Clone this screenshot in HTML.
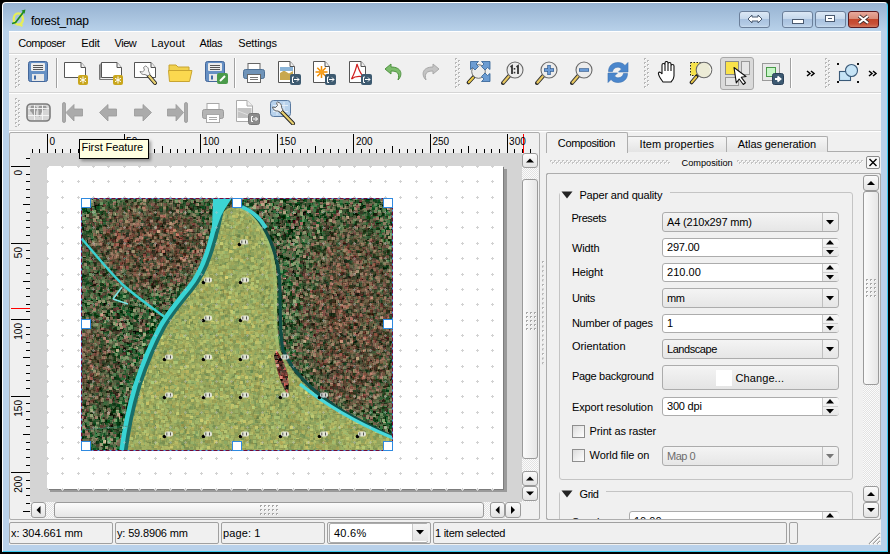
<!DOCTYPE html>
<html><head><meta charset="utf-8"><style>
html,body{margin:0;padding:0;}
body{width:890px;height:554px;overflow:hidden;position:relative;background:#000;font-family:"Liberation Sans",sans-serif;}
body div{position:absolute;box-sizing:content-box;}
.t{white-space:nowrap;}
</style></head><body>
<div style="left:2px;top:2px;width:884px;height:548px;background:linear-gradient(#97b3d2 0px,#b9d2ea 29px,#b9d1ea 29px);border-style:solid;border-width:1px;border-color:#fff #3dcaf0 #3dcaf0 #fff;border-radius:4px 4px 0 0;"></div>
<svg style="position:absolute;left:10px;top:9px;" width="17" height="18" viewBox="0 0 17 18"><ellipse cx="8.3" cy="10" rx="4.6" ry="5.6" fill="none" stroke="#e6ee58" stroke-width="2.4"/><path d="M9 15 L12.5 17" stroke="#e6ee58" stroke-width="2.2"/><path d="M2 14.5 L5.5 13.5 L13.5 3" stroke="#1f8a1f" stroke-width="1.7" fill="none"/><path d="M11.5 1.5 L15.5 0.5 L14.5 4.8 Z" fill="#1f8a1f"/></svg>
<div class="t" style="left:31px;top:14.74px;font-size:12px;line-height:12px;color:#000;letter-spacing:-0.239px;">forest_map</div>
<div style="left:739px;top:11px;width:29px;height:15px;border:1px solid #6b7f9a;border-radius:3px;background:linear-gradient(#dce8f5 0%,#c6d8ec 45%,#a9c2df 50%,#b4cbe5 85%,#c9dcef 100%);"></div>
<svg style="position:absolute;left:747px;top:14px;" width="16" height="10" viewBox="0 0 16 10"><path d="M1 5 L5 1 L5 3 L11 3 L11 1 L15 5 L11 9 L11 7 L5 7 L5 9 Z" fill="#fff" stroke="#4a5a70" stroke-width="1"/></svg>
<div style="left:782px;top:11px;width:29px;height:15px;border:1px solid #6b7f9a;border-radius:3px;background:linear-gradient(#dce8f5 0%,#c6d8ec 45%,#a9c2df 50%,#b4cbe5 85%,#c9dcef 100%);"></div>
<div style="left:792px;top:19px;width:10px;height:3px;background:#fff;border:1px solid #4a5a70;"></div>
<div style="left:815px;top:11px;width:29px;height:15px;border:1px solid #6b7f9a;border-radius:3px;background:linear-gradient(#dce8f5 0%,#c6d8ec 45%,#a9c2df 50%,#b4cbe5 85%,#c9dcef 100%);"></div>
<div style="left:825px;top:15px;width:8px;height:5px;border:1px solid #4a5a70;box-shadow:inset 0 0 0 2px #fff, inset 0 0 0 3px #4a5a70;"></div>
<div style="left:848px;top:11px;width:29px;height:15px;border:1px solid #5a1a20;border-radius:3px;background:linear-gradient(#e8a99c 0%,#d98b78 45%,#c3472c 50%,#c85038 80%,#d2785e 100%);"></div>
<svg style="position:absolute;left:857px;top:14px;" width="13" height="11" viewBox="0 0 13 11"><path d="M2 2 L11 9 M11 2 L2 9" stroke="#3c2a2a" stroke-width="3.6"/><path d="M2 2 L11 9 M11 2 L2 9" stroke="#fff" stroke-width="2.2"/></svg>
<div style="left:9px;top:31px;width:872px;height:514px;background:#f0f0f0;"></div>
<div style="left:9px;top:31px;width:872px;height:1px;background:#fff;"></div>
<div class="t" style="left:18.2px;top:37.59px;font-size:11px;line-height:11px;color:#000;letter-spacing:-0.468px;">Composer</div>
<div class="t" style="left:81.3px;top:37.59px;font-size:11px;line-height:11px;color:#000;letter-spacing:-0.133px;">Edit</div>
<div class="t" style="left:114.6px;top:37.59px;font-size:11px;line-height:11px;color:#000;letter-spacing:-0.500px;">View</div>
<div class="t" style="left:151.2px;top:37.59px;font-size:11px;line-height:11px;color:#000;letter-spacing:0.106px;">Layout</div>
<div class="t" style="left:199.6px;top:37.59px;font-size:11px;line-height:11px;color:#000;letter-spacing:-0.364px;">Atlas</div>
<div class="t" style="left:238.2px;top:37.59px;font-size:11px;line-height:11px;color:#000;letter-spacing:-0.135px;">Settings</div>
<div style="left:9px;top:53px;width:872px;height:1px;background:#d5d5d5;"></div>
<div style="left:9px;top:54px;width:872px;height:1px;background:#fff;"></div>
<div style="left:9px;top:92px;width:872px;height:1px;background:#d5d5d5;"></div>
<div style="left:9px;top:93px;width:872px;height:1px;background:#fff;"></div>
<div style="left:9px;top:130px;width:872px;height:1px;background:#d5d5d5;"></div>
<div style="left:9px;top:131px;width:872px;height:1px;background:#fff;"></div>
<svg style="position:absolute;left:15px;top:58px;" width="6" height="30" viewBox="0 0 6 30"><rect x="0" y="0" width="2" height="2" fill="#b8b8b8"/><rect x="1" y="1" width="1" height="1" fill="#fff"/><rect x="3" y="2" width="2" height="2" fill="#b8b8b8"/><rect x="4" y="3" width="1" height="1" fill="#fff"/><rect x="0" y="4" width="2" height="2" fill="#b8b8b8"/><rect x="1" y="5" width="1" height="1" fill="#fff"/><rect x="3" y="6" width="2" height="2" fill="#b8b8b8"/><rect x="4" y="7" width="1" height="1" fill="#fff"/><rect x="0" y="8" width="2" height="2" fill="#b8b8b8"/><rect x="1" y="9" width="1" height="1" fill="#fff"/><rect x="3" y="10" width="2" height="2" fill="#b8b8b8"/><rect x="4" y="11" width="1" height="1" fill="#fff"/><rect x="0" y="12" width="2" height="2" fill="#b8b8b8"/><rect x="1" y="13" width="1" height="1" fill="#fff"/><rect x="3" y="14" width="2" height="2" fill="#b8b8b8"/><rect x="4" y="15" width="1" height="1" fill="#fff"/><rect x="0" y="16" width="2" height="2" fill="#b8b8b8"/><rect x="1" y="17" width="1" height="1" fill="#fff"/><rect x="3" y="18" width="2" height="2" fill="#b8b8b8"/><rect x="4" y="19" width="1" height="1" fill="#fff"/><rect x="0" y="20" width="2" height="2" fill="#b8b8b8"/><rect x="1" y="21" width="1" height="1" fill="#fff"/><rect x="3" y="22" width="2" height="2" fill="#b8b8b8"/><rect x="4" y="23" width="1" height="1" fill="#fff"/><rect x="0" y="24" width="2" height="2" fill="#b8b8b8"/><rect x="1" y="25" width="1" height="1" fill="#fff"/><rect x="3" y="26" width="2" height="2" fill="#b8b8b8"/><rect x="4" y="27" width="1" height="1" fill="#fff"/><rect x="0" y="28" width="2" height="2" fill="#b8b8b8"/><rect x="1" y="29" width="1" height="1" fill="#fff"/><rect x="3" y="30" width="2" height="2" fill="#b8b8b8"/><rect x="4" y="31" width="1" height="1" fill="#fff"/></svg>
<svg style="position:absolute;left:455px;top:58px;" width="6" height="30" viewBox="0 0 6 30"><rect x="0" y="0" width="2" height="2" fill="#b8b8b8"/><rect x="1" y="1" width="1" height="1" fill="#fff"/><rect x="3" y="2" width="2" height="2" fill="#b8b8b8"/><rect x="4" y="3" width="1" height="1" fill="#fff"/><rect x="0" y="4" width="2" height="2" fill="#b8b8b8"/><rect x="1" y="5" width="1" height="1" fill="#fff"/><rect x="3" y="6" width="2" height="2" fill="#b8b8b8"/><rect x="4" y="7" width="1" height="1" fill="#fff"/><rect x="0" y="8" width="2" height="2" fill="#b8b8b8"/><rect x="1" y="9" width="1" height="1" fill="#fff"/><rect x="3" y="10" width="2" height="2" fill="#b8b8b8"/><rect x="4" y="11" width="1" height="1" fill="#fff"/><rect x="0" y="12" width="2" height="2" fill="#b8b8b8"/><rect x="1" y="13" width="1" height="1" fill="#fff"/><rect x="3" y="14" width="2" height="2" fill="#b8b8b8"/><rect x="4" y="15" width="1" height="1" fill="#fff"/><rect x="0" y="16" width="2" height="2" fill="#b8b8b8"/><rect x="1" y="17" width="1" height="1" fill="#fff"/><rect x="3" y="18" width="2" height="2" fill="#b8b8b8"/><rect x="4" y="19" width="1" height="1" fill="#fff"/><rect x="0" y="20" width="2" height="2" fill="#b8b8b8"/><rect x="1" y="21" width="1" height="1" fill="#fff"/><rect x="3" y="22" width="2" height="2" fill="#b8b8b8"/><rect x="4" y="23" width="1" height="1" fill="#fff"/><rect x="0" y="24" width="2" height="2" fill="#b8b8b8"/><rect x="1" y="25" width="1" height="1" fill="#fff"/><rect x="3" y="26" width="2" height="2" fill="#b8b8b8"/><rect x="4" y="27" width="1" height="1" fill="#fff"/><rect x="0" y="28" width="2" height="2" fill="#b8b8b8"/><rect x="1" y="29" width="1" height="1" fill="#fff"/><rect x="3" y="30" width="2" height="2" fill="#b8b8b8"/><rect x="4" y="31" width="1" height="1" fill="#fff"/></svg>
<svg style="position:absolute;left:644px;top:58px;" width="6" height="30" viewBox="0 0 6 30"><rect x="0" y="0" width="2" height="2" fill="#b8b8b8"/><rect x="1" y="1" width="1" height="1" fill="#fff"/><rect x="3" y="2" width="2" height="2" fill="#b8b8b8"/><rect x="4" y="3" width="1" height="1" fill="#fff"/><rect x="0" y="4" width="2" height="2" fill="#b8b8b8"/><rect x="1" y="5" width="1" height="1" fill="#fff"/><rect x="3" y="6" width="2" height="2" fill="#b8b8b8"/><rect x="4" y="7" width="1" height="1" fill="#fff"/><rect x="0" y="8" width="2" height="2" fill="#b8b8b8"/><rect x="1" y="9" width="1" height="1" fill="#fff"/><rect x="3" y="10" width="2" height="2" fill="#b8b8b8"/><rect x="4" y="11" width="1" height="1" fill="#fff"/><rect x="0" y="12" width="2" height="2" fill="#b8b8b8"/><rect x="1" y="13" width="1" height="1" fill="#fff"/><rect x="3" y="14" width="2" height="2" fill="#b8b8b8"/><rect x="4" y="15" width="1" height="1" fill="#fff"/><rect x="0" y="16" width="2" height="2" fill="#b8b8b8"/><rect x="1" y="17" width="1" height="1" fill="#fff"/><rect x="3" y="18" width="2" height="2" fill="#b8b8b8"/><rect x="4" y="19" width="1" height="1" fill="#fff"/><rect x="0" y="20" width="2" height="2" fill="#b8b8b8"/><rect x="1" y="21" width="1" height="1" fill="#fff"/><rect x="3" y="22" width="2" height="2" fill="#b8b8b8"/><rect x="4" y="23" width="1" height="1" fill="#fff"/><rect x="0" y="24" width="2" height="2" fill="#b8b8b8"/><rect x="1" y="25" width="1" height="1" fill="#fff"/><rect x="3" y="26" width="2" height="2" fill="#b8b8b8"/><rect x="4" y="27" width="1" height="1" fill="#fff"/><rect x="0" y="28" width="2" height="2" fill="#b8b8b8"/><rect x="1" y="29" width="1" height="1" fill="#fff"/><rect x="3" y="30" width="2" height="2" fill="#b8b8b8"/><rect x="4" y="31" width="1" height="1" fill="#fff"/></svg>
<svg style="position:absolute;left:825px;top:58px;" width="6" height="30" viewBox="0 0 6 30"><rect x="0" y="0" width="2" height="2" fill="#b8b8b8"/><rect x="1" y="1" width="1" height="1" fill="#fff"/><rect x="3" y="2" width="2" height="2" fill="#b8b8b8"/><rect x="4" y="3" width="1" height="1" fill="#fff"/><rect x="0" y="4" width="2" height="2" fill="#b8b8b8"/><rect x="1" y="5" width="1" height="1" fill="#fff"/><rect x="3" y="6" width="2" height="2" fill="#b8b8b8"/><rect x="4" y="7" width="1" height="1" fill="#fff"/><rect x="0" y="8" width="2" height="2" fill="#b8b8b8"/><rect x="1" y="9" width="1" height="1" fill="#fff"/><rect x="3" y="10" width="2" height="2" fill="#b8b8b8"/><rect x="4" y="11" width="1" height="1" fill="#fff"/><rect x="0" y="12" width="2" height="2" fill="#b8b8b8"/><rect x="1" y="13" width="1" height="1" fill="#fff"/><rect x="3" y="14" width="2" height="2" fill="#b8b8b8"/><rect x="4" y="15" width="1" height="1" fill="#fff"/><rect x="0" y="16" width="2" height="2" fill="#b8b8b8"/><rect x="1" y="17" width="1" height="1" fill="#fff"/><rect x="3" y="18" width="2" height="2" fill="#b8b8b8"/><rect x="4" y="19" width="1" height="1" fill="#fff"/><rect x="0" y="20" width="2" height="2" fill="#b8b8b8"/><rect x="1" y="21" width="1" height="1" fill="#fff"/><rect x="3" y="22" width="2" height="2" fill="#b8b8b8"/><rect x="4" y="23" width="1" height="1" fill="#fff"/><rect x="0" y="24" width="2" height="2" fill="#b8b8b8"/><rect x="1" y="25" width="1" height="1" fill="#fff"/><rect x="3" y="26" width="2" height="2" fill="#b8b8b8"/><rect x="4" y="27" width="1" height="1" fill="#fff"/><rect x="0" y="28" width="2" height="2" fill="#b8b8b8"/><rect x="1" y="29" width="1" height="1" fill="#fff"/><rect x="3" y="30" width="2" height="2" fill="#b8b8b8"/><rect x="4" y="31" width="1" height="1" fill="#fff"/></svg>
<svg style="position:absolute;left:15px;top:98px;" width="6" height="29" viewBox="0 0 6 29"><rect x="0" y="0" width="2" height="2" fill="#b8b8b8"/><rect x="1" y="1" width="1" height="1" fill="#fff"/><rect x="3" y="2" width="2" height="2" fill="#b8b8b8"/><rect x="4" y="3" width="1" height="1" fill="#fff"/><rect x="0" y="4" width="2" height="2" fill="#b8b8b8"/><rect x="1" y="5" width="1" height="1" fill="#fff"/><rect x="3" y="6" width="2" height="2" fill="#b8b8b8"/><rect x="4" y="7" width="1" height="1" fill="#fff"/><rect x="0" y="8" width="2" height="2" fill="#b8b8b8"/><rect x="1" y="9" width="1" height="1" fill="#fff"/><rect x="3" y="10" width="2" height="2" fill="#b8b8b8"/><rect x="4" y="11" width="1" height="1" fill="#fff"/><rect x="0" y="12" width="2" height="2" fill="#b8b8b8"/><rect x="1" y="13" width="1" height="1" fill="#fff"/><rect x="3" y="14" width="2" height="2" fill="#b8b8b8"/><rect x="4" y="15" width="1" height="1" fill="#fff"/><rect x="0" y="16" width="2" height="2" fill="#b8b8b8"/><rect x="1" y="17" width="1" height="1" fill="#fff"/><rect x="3" y="18" width="2" height="2" fill="#b8b8b8"/><rect x="4" y="19" width="1" height="1" fill="#fff"/><rect x="0" y="20" width="2" height="2" fill="#b8b8b8"/><rect x="1" y="21" width="1" height="1" fill="#fff"/><rect x="3" y="22" width="2" height="2" fill="#b8b8b8"/><rect x="4" y="23" width="1" height="1" fill="#fff"/><rect x="0" y="24" width="2" height="2" fill="#b8b8b8"/><rect x="1" y="25" width="1" height="1" fill="#fff"/><rect x="3" y="26" width="2" height="2" fill="#b8b8b8"/><rect x="4" y="27" width="1" height="1" fill="#fff"/><rect x="0" y="28" width="2" height="2" fill="#b8b8b8"/><rect x="1" y="29" width="1" height="1" fill="#fff"/><rect x="3" y="30" width="2" height="2" fill="#b8b8b8"/><rect x="4" y="31" width="1" height="1" fill="#fff"/></svg>
<div style="left:56px;top:58px;width:1px;height:30px;background:#a0a0a0;"></div>
<div style="left:57px;top:58px;width:1px;height:30px;background:#fff;"></div>
<div style="left:234px;top:58px;width:1px;height:30px;background:#a0a0a0;"></div>
<div style="left:235px;top:58px;width:1px;height:30px;background:#fff;"></div>
<div style="left:790px;top:58px;width:1px;height:30px;background:#a0a0a0;"></div>
<div style="left:791px;top:58px;width:1px;height:30px;background:#fff;"></div>
<svg style="position:absolute;left:28px;top:61px;" width="20" height="21" viewBox="0 0 20 21"><rect x="0.5" y="0.5" width="19" height="20" rx="2" fill="#6690c4" stroke="#44679a"/><rect x="3" y="2" width="14" height="8" rx="1" fill="#ececec"/><path d="M5 4.5H15M5 6.5H15M5 8.5H15" stroke="#555" stroke-width="1"/><rect x="4" y="13" width="12" height="7" fill="#e8e8e8"/><rect x="6" y="14.5" width="2" height="4" fill="#3f6aa6"/></svg>
<svg style="position:absolute;left:64px;top:61px;" width="24" height="24" viewBox="0 0 24 24"><path d="M0.5 1.5 H17 L21.5 6.5 V16.5 H0.5 Z" fill="#fff" stroke="#555" stroke-width="1"/><path d="M17 1.5 V6.5 H21.5" fill="#eee" stroke="#555" stroke-width="1"/><rect x="14" y="14" width="10" height="10" rx="2" fill="#c9a61c"/><path d="M19 15.5 V22.5 M16 17.3 L22 20.7 M22 17.3 L16 20.7" stroke="#fff" stroke-width="1"/></svg>
<svg style="position:absolute;left:99px;top:61px;" width="24" height="24" viewBox="0 0 24 24"><path d="M0.5 3.5 V18.5 H18" fill="none" stroke="#777" stroke-width="1"/><path d="M1.5 2.5 V17.5" stroke="#999"/><path d="M2.5 1.5 H18 L22.5 6.5 V16.5 H2.5 Z" fill="#fff" stroke="#555" stroke-width="1"/><path d="M18 1.5 V6.5 H22.5" fill="#eee" stroke="#555" stroke-width="1"/><rect x="14" y="14" width="10" height="10" rx="2" fill="#c9a61c"/><path d="M19 15.5 V22.5 M16 17.3 L22 20.7 M22 17.3 L16 20.7" stroke="#fff" stroke-width="1"/></svg>
<svg style="position:absolute;left:133px;top:61px;" width="26" height="25" viewBox="0 0 26 25"><path d="M1.5 1.5 H18 L22.5 6.5 V16.5 H1.5 Z" fill="#fff" stroke="#555" stroke-width="1"/><path d="M18 1.5 V6.5 H22.5" fill="#eee" stroke="#555" stroke-width="1"/><path d="M15.5 14.5 L22 22" stroke="#222" stroke-width="4" stroke-linecap="round"/><path d="M16 15 L22 22" stroke="#e8d070" stroke-width="2.2" stroke-linecap="round"/><path d="M12.5 5 C14.5 5.5 16 7.5 15.5 10 L17 13 L15 15 L12 13.5 C9.5 14 7.5 12.5 7 10.5 L9.5 11 L11.5 9 L10.5 6.5 Z" fill="#f4f4f4" stroke="#777" stroke-width="0.9"/></svg>
<svg style="position:absolute;left:168px;top:63px;" width="25" height="19" viewBox="0 0 25 19"><path d="M1 2 H8 L10 4 H21 V8 H1 Z" fill="#f1d14e" stroke="#c8a430"/><path d="M0.5 7.5 H24 L21.5 18.5 H1.5 Z" fill="#fbd84f" stroke="#c8a430"/></svg>
<svg style="position:absolute;left:205px;top:61px;" width="24" height="24" viewBox="0 0 24 24"><rect x="0.5" y="0.5" width="19" height="20" rx="2" fill="#6690c4" stroke="#44679a"/><rect x="3" y="2" width="14" height="8" rx="1" fill="#ececec"/><path d="M5 4.5H15M5 6.5H15M5 8.5H15" stroke="#555" stroke-width="1"/><rect x="4" y="13" width="12" height="7" fill="#e8e8e8"/><rect x="6" y="14.5" width="2" height="4" fill="#3f6aa6"/><rect x="12" y="12" width="11" height="11" rx="2" fill="#4a9a4a"/><path d="M15 20 L20 15" stroke="#fff" stroke-width="2"/></svg>
<svg style="position:absolute;left:243px;top:63px;" width="22" height="20" viewBox="0 0 22 20"><rect x="5" y="0.5" width="12" height="7" fill="#fff" stroke="#666"/><rect x="0.5" y="6.5" width="21" height="9" rx="2" fill="#6f93b8" stroke="#4c6f94"/><rect x="4.5" y="11.5" width="13" height="8" fill="#fff" stroke="#666"/><path d="M7 14.5H15M7 16.5H15" stroke="#777"/></svg>
<svg style="position:absolute;left:278px;top:61px;" width="25" height="25" viewBox="0 0 25 25"><path d="M0.5 0.5 H12 L16.5 5.5 V21.5 H0.5 Z" fill="#fff" stroke="#555" stroke-width="1"/><path d="M12 0.5 V5.5 H16.5" fill="#eee" stroke="#555" stroke-width="1"/><path d="M2 19 L2 12 L6 9.5 L11 12.5 L15 10 V19 Z" fill="#c8a850"/><path d="M2 8 H15" stroke="#8ab4d8" stroke-width="4"/><rect x="12" y="13" width="11" height="11" rx="2" fill="#3d5a70"/><path d="M16 16 H14.5 V21.5 H16" stroke="#fff" fill="none" stroke-width="1"/><path d="M16 18.5 H21 M19 16.5 L21 18.5 L19 20.5" stroke="#fff" fill="none" stroke-width="1"/></svg>
<svg style="position:absolute;left:313px;top:61px;" width="25" height="25" viewBox="0 0 25 25"><path d="M0.5 0.5 H12 L16.5 5.5 V21.5 H0.5 Z" fill="#fff" stroke="#555" stroke-width="1"/><path d="M12 0.5 V5.5 H16.5" fill="#eee" stroke="#555" stroke-width="1"/><g stroke="#f08c00" stroke-width="1.5"><path d="M8.5 5 V17 M2.5 11 H14.5 M4.3 6.8 L12.7 15.2 M12.7 6.8 L4.3 15.2"/></g><circle cx="8.5" cy="11" r="2.5" fill="#f6a020"/><rect x="12" y="13" width="11" height="11" rx="2" fill="#3d5a70"/><path d="M16 16 H14.5 V21.5 H16" stroke="#fff" fill="none" stroke-width="1"/><path d="M16 18.5 H21 M19 16.5 L21 18.5 L19 20.5" stroke="#fff" fill="none" stroke-width="1"/></svg>
<svg style="position:absolute;left:349px;top:61px;" width="25" height="25" viewBox="0 0 25 25"><path d="M0.5 0.5 H12 L16.5 5.5 V21.5 H0.5 Z" fill="#fff" stroke="#555" stroke-width="1"/><path d="M12 0.5 V5.5 H16.5" fill="#eee" stroke="#555" stroke-width="1"/><path d="M8 3 C10 9 11 13 15 16 C11 15 6 15 2.5 18 C5 13 7 9 8 3 Z" fill="none" stroke="#d02020" stroke-width="1.3"/><rect x="12" y="13" width="11" height="11" rx="2" fill="#3d5a70"/><path d="M16 16 H14.5 V21.5 H16" stroke="#fff" fill="none" stroke-width="1"/><path d="M16 18.5 H21 M19 16.5 L21 18.5 L19 20.5" stroke="#fff" fill="none" stroke-width="1"/></svg>
<svg style="position:absolute;left:384px;top:63px;" width="20" height="18" viewBox="0 0 20 18"><path d="M7 1 L1 6 L7 11 V8 C13 8 16 10 14 17 C19 12 18 4 7 4 Z" fill="#7cbc6c" stroke="#4e9240" stroke-width="1"/></svg>
<svg style="position:absolute;left:420px;top:63px;" width="20" height="18" viewBox="0 0 20 18"><path d="M13 1 L19 6 L13 11 V8 C7 8 4 10 6 17 C1 12 2 4 13 4 Z" fill="#c4c4c4" stroke="#a8a8a8" stroke-width="1"/></svg>
<svg style="position:absolute;left:466px;top:61px;" width="25" height="25" viewBox="0 0 25 25"><path d="M8 15.5 L2.5 21.5" stroke="#222" stroke-width="3.6" stroke-linecap="round"/><path d="M7.2 16.5 L2.8 21.2" stroke="#eac848" stroke-width="2" stroke-linecap="round"/><circle cx="12.5" cy="10.5" r="6.8" fill="#ececec" stroke="#666" stroke-width="0.9"/><g fill="#6c9cd2" stroke="#2f5f94" stroke-width="0.8"><path d="M4.5 0.5 H12.5 L10 3 L12.5 5.5 L9 9 L6.5 6.5 L4.5 8.5 Z"/><path d="M24 0.5 H15.5 L18 3 L15.5 5.5 L19 9 L21.5 6.5 L24 8.5 Z"/><path d="M24 20.5 H15.5 L18 18 L15.5 15.5 L19 12 L21.5 14.5 L24 12.5 Z"/></g></svg>
<svg style="position:absolute;left:501px;top:61px;" width="25" height="24" viewBox="0 0 25 24"><path d="M8.4 14.6 L2 22" stroke="#333" stroke-width="4" stroke-linecap="round"/><path d="M8.4 14.6 L2.5 21.5" stroke="#e8c860" stroke-width="2.2" stroke-linecap="round"/><circle cx="14" cy="9" r="8" fill="#ececec" stroke="#6a6a6a" stroke-width="1.1"/><path d="M9.5 6 L11 5 V13 M15.5 6 L17 5 V13" stroke="#333" stroke-width="1.8" fill="none"/><rect x="12.7" y="7" width="1.6" height="1.6" fill="#333"/><rect x="12.7" y="10.8" width="1.6" height="1.6" fill="#333"/></svg>
<svg style="position:absolute;left:535px;top:61px;" width="24" height="24" viewBox="0 0 24 24"><path d="M8.4 14.6 L2 22" stroke="#333" stroke-width="4" stroke-linecap="round"/><path d="M8.4 14.6 L2.5 21.5" stroke="#e8c860" stroke-width="2.2" stroke-linecap="round"/><circle cx="14" cy="9" r="8" fill="#ececec" stroke="#6a6a6a" stroke-width="1.1"/><path d="M14 4 V14 M9 9 H19" stroke="#2e5a90" stroke-width="3.4"/><path d="M14 4.6 V13.4 M9.6 9 H18.4" stroke="#6a9ad4" stroke-width="2"/></svg>
<svg style="position:absolute;left:570px;top:61px;" width="25" height="24" viewBox="0 0 25 24"><path d="M8.4 14.6 L2 22" stroke="#333" stroke-width="4" stroke-linecap="round"/><path d="M8.4 14.6 L2.5 21.5" stroke="#e8c860" stroke-width="2.2" stroke-linecap="round"/><circle cx="14" cy="9" r="8" fill="#ececec" stroke="#6a6a6a" stroke-width="1.1"/><path d="M9 9 H19" stroke="#2e5a90" stroke-width="3.4"/><path d="M9.6 9 H18.4" stroke="#6a9ad4" stroke-width="2"/></svg>
<svg style="position:absolute;left:607px;top:61px;" width="22" height="23" viewBox="0 0 22 23"><g fill="#4a86cc" stroke="#3a70b0" stroke-width="0.6"><path d="M1.5 10.5 C1.5 4.5 6 1.5 11 1.5 C14 1.5 16.5 2.5 18 4.5 L21 1.5 V11 H11.5 L14.5 8 C13.5 6.8 12.3 6.2 10.8 6.2 C8 6.2 6 8 5.5 10.5 Z"/><path d="M1.5 10.5 C1.5 4.5 6 1.5 11 1.5 C14 1.5 16.5 2.5 18 4.5 L21 1.5 V11 H11.5 L14.5 8 C13.5 6.8 12.3 6.2 10.8 6.2 C8 6.2 6 8 5.5 10.5 Z" transform="rotate(180 11 11.5)"/></g></svg>
<svg style="position:absolute;left:657px;top:61px;" width="22" height="24" viewBox="0 0 22 24"><path d="M6 21 C3 17 1 14 1.5 12 C2 10.5 4 11 5 13 V4 C5 2 8 2 8 4 V10 V2 C8 0 11 0 11 2 V10 V3 C11 1 14 1 14 3 V10 V5 C14 3 17 3 17 5 V15 C17 18 15 20 14 21 Z" fill="#fff" stroke="#111" stroke-width="1.1"/></svg>
<svg style="position:absolute;left:689px;top:61px;" width="26" height="24" viewBox="0 0 26 24"><rect x="1.5" y="1.5" width="10" height="13" fill="#f6e24a" stroke="#222" stroke-dasharray="1.5 1.5"/><path d="M8 15 L2.5 21.5" stroke="#222" stroke-width="3.6" stroke-linecap="round"/><path d="M7.2 16 L2.8 21.2" stroke="#eac848" stroke-width="2" stroke-linecap="round"/><circle cx="15" cy="9" r="7.8" fill="#ecebd6" stroke="#6a6a6a" stroke-width="1.1"/><path d="M20 5 A5.5 5.5 0 0 1 21 12" stroke="#fff" stroke-width="1" fill="none" opacity="0.7"/></svg>
<div style="left:720px;top:57px;width:32px;height:31px;border:1px solid #a8a8a8;border-radius:3px;background:#dadada;"></div>
<svg style="position:absolute;left:725px;top:61px;" width="27" height="27" viewBox="0 0 27 27"><rect x="0.5" y="0.5" width="13" height="13" fill="#f9e24a" stroke="#8a8a8a"/><rect x="16.5" y="0.5" width="8" height="13" fill="#e6e6e6" stroke="#999"/><rect x="0.5" y="16.5" width="13" height="8" fill="#e6e6e6" stroke="#999"/><path d="M9 6.5 L21 15.5 L16.3 16.3 L20.5 21.8 L18.3 23.5 L14.2 18 L11.3 21.8 Z" fill="#fff" stroke="#111" stroke-width="1.1" stroke-linejoin="round"/></svg>
<svg style="position:absolute;left:762px;top:63px;" width="24" height="22" viewBox="0 0 24 22"><rect x="0.5" y="0.5" width="17" height="17" fill="#e8e8e8" stroke="#9a9a9a"/><rect x="4.5" y="4.5" width="9" height="9" fill="#c8f6c8" stroke="#4a9a4a"/><rect x="10.5" y="10.5" width="11" height="11" rx="2" fill="#3d5a72" stroke="#2a4058"/><path d="M13 16 H17 M15.5 13.5 L18.5 16 L15.5 18.5" stroke="#fff" stroke-width="1.8" fill="none"/></svg>
<svg style="position:absolute;left:806px;top:70px;" width="10" height="7" viewBox="0 0 10 7"><path d="M1 1 L4 3.5 L1 6 M5 1 L8 3.5 L5 6" stroke="#000" stroke-width="1.5" fill="none"/></svg>
<svg style="position:absolute;left:836px;top:62px;" width="24" height="22" viewBox="0 0 24 22"><rect x="3.5" y="9.5" width="11" height="9" fill="#c6e4f6" stroke="#3a5a78" stroke-width="1.1"/><circle cx="15.5" cy="8.5" r="6" fill="#c6e4f6" stroke="#3a5a78" stroke-width="1.1"/><g fill="#111"><rect x="1" y="1" width="2" height="2"/><rect x="21" y="1" width="2" height="2"/><rect x="1" y="19" width="2" height="2"/><rect x="21" y="19" width="2" height="2"/></g></svg>
<svg style="position:absolute;left:868px;top:70px;" width="10" height="7" viewBox="0 0 10 7"><path d="M1 1 L4 3.5 L1 6 M5 1 L8 3.5 L5 6" stroke="#000" stroke-width="1.5" fill="none"/></svg>
<svg style="position:absolute;left:26px;top:103px;" width="25" height="19" viewBox="0 0 25 19"><rect x="1" y="1" width="23" height="17" rx="4" fill="#d6d6d6" stroke="#7c7c7c" stroke-width="1.6"/><path d="M5 3 C9 2 12 4 11 7 C9 9 11 12 9 14 C7 12 6 9 4 8 Z M13 3 H20 L21 6 C19 7 17 6 16 9 C14 11 15 13 13 14 C12 11 13 8 12 6 Z" fill="#9a9a9a"/><path d="M2 5.5 H23 M2 12.5 H23 M8.5 2 V17 M16.5 2 V17" stroke="#f6f6f6" stroke-width="0.9"/></svg>
<svg style="position:absolute;left:62px;top:102px;" width="22" height="22" viewBox="0 0 22 22"><rect x="0.5" y="0.5" width="3" height="20" rx="1.5" fill="#ababab" stroke="#999" stroke-width="0.8"/><path d="M4 10.5 L12 2.5 V7 H20.5 V14 H12 V19 Z" fill="#ababab" stroke="#999" stroke-width="0.8"/></svg>
<svg style="position:absolute;left:99px;top:102px;" width="19" height="22" viewBox="0 0 19 22"><path d="M0.5 10.5 L9 2.5 V7 H17.5 V14 H9 V19 Z" fill="#ababab" stroke="#999" stroke-width="0.8"/></svg>
<svg style="position:absolute;left:134px;top:102px;" width="19" height="22" viewBox="0 0 19 22"><path d="M17.5 10.5 L9 2.5 V7 H0.5 V14 H9 V19 Z" fill="#ababab" stroke="#999" stroke-width="0.8"/></svg>
<svg style="position:absolute;left:167px;top:102px;" width="22" height="22" viewBox="0 0 22 22"><rect x="17.5" y="0.5" width="3" height="20" rx="1.5" fill="#ababab" stroke="#999" stroke-width="0.8"/><path d="M16.5 10.5 L9 2.5 V7 H0.5 V14 H9 V19 Z" fill="#ababab" stroke="#999" stroke-width="0.8"/></svg>
<svg style="position:absolute;left:202px;top:103px;" width="22" height="20" viewBox="0 0 22 20"><rect x="5" y="0.5" width="12" height="7" fill="#fff" stroke="#a8a8a8"/><rect x="0.5" y="6.5" width="21" height="9" rx="2" fill="#b4b4b4" stroke="#9a9a9a"/><rect x="4.5" y="11.5" width="13" height="8" fill="#fff" stroke="#a8a8a8"/><path d="M7 14.5H15M7 16.5H15" stroke="#aaa"/></svg>
<svg style="position:absolute;left:236px;top:100px;" width="26" height="25" viewBox="0 0 26 25"><path d="M0.5 .5 H11 L16.5 6 V21.5 H.5 Z" fill="#fff" stroke="#aaa"/><path d="M11 .5 V6 H16.5" fill="#eee" stroke="#aaa"/><rect x="1.5" y="8" width="14" height="10" fill="#c4c4c4"/><path d="M2 11 L15 16" stroke="#e0e0e0"/><rect x="12.5" y="13.5" width="11" height="11" rx="2" fill="#8c8c8c" stroke="#777"/><path d="M17 16.5 H15.5 V21.5 H17 M17 19 H21.5 M19.5 17 L21.5 19 L19.5 21" stroke="#fff" fill="none"/></svg>
<svg style="position:absolute;left:270px;top:100px;" width="26" height="25" viewBox="0 0 26 25"><rect x="0.5" y="0.5" width="20" height="16" rx="3" fill="#b8d2ec" stroke="#5a7aa0"/><path d="M3 5.5 H18 M3 11.5 H18 M7 2 V15 M14 2 V15" stroke="#e4eef8"/><path d="M10 10 L23 23.5" stroke="#222" stroke-width="4" stroke-linecap="round"/><path d="M10.5 10.5 L23 23.5" stroke="#e8d070" stroke-width="2.2" stroke-linecap="round"/><path d="M7.5 2 C10 2.5 12 4.5 11.5 7.5 L13 10 L10.5 12.5 L8 11 C5 11.5 3 9.5 2.5 7 L5.5 7.5 L7.5 5.5 L6.5 2.8 Z" fill="#f4f4f4" stroke="#555" stroke-width="0.9"/></svg>
<div style="left:9px;top:132px;width:529px;height:386px;border:1px solid #adadad;border-radius:2px;background:#f0f0f0;"></div>
<div style="left:30px;top:153px;width:492px;height:349px;background:#d4d4d4;"></div>
<div style="left:50px;top:169px;width:457px;height:323px;background:#9a9a9a;"></div>
<div style="left:48px;top:167px;width:456px;height:323px;background:#7c7c7c;"></div>
<div style="left:47px;top:166px;width:456px;height:323px;background:#fff;border-right:0;"></div>
<svg style="position:absolute;left:81px;top:198px;" width="312" height="253" viewBox="0 0 312 253"><defs><filter id="fz" x="0" y="0" width="100%" height="100%" color-interpolation-filters="sRGB"><feTurbulence type="fractalNoise" baseFrequency="0.7" numOctaves="1" seed="5"/><feMorphology operator="dilate" radius="1"/><feColorMatrix type="matrix" values="1.0 0 2.3 0 -1.6 -0.5 0 1.7 0 -0.31 0.1 0 1.6 0 -0.73 0 0 0 0 1"/></filter><filter id="fr" x="0" y="0" width="100%" height="100%" color-interpolation-filters="sRGB"><feTurbulence type="fractalNoise" baseFrequency="0.7" numOctaves="1" seed="9"/><feMorphology operator="dilate" radius="1"/><feColorMatrix type="matrix" values="1.1 0 2.3 0 -1.46 -0.2 0 1.7 0 -0.58 -0.1 0 1.5 0 -0.56 0 0 0 0 1"/></filter><filter id="ff" x="0" y="0" width="100%" height="100%" color-interpolation-filters="sRGB"><feTurbulence type="fractalNoise" baseFrequency="0.8" numOctaves="1" seed="2"/><feMorphology operator="dilate" radius="1"/><feColorMatrix type="matrix" values="0.5 0 0.7 0 -0.08 0.1 0 0.7 0 0.205 -0.1 0 0.45 0 0.17 0 0 0 0 1"/></filter><filter id="bl" x="-50%" y="-50%" width="200%" height="200%"><feGaussianBlur stdDeviation="14"/></filter></defs><g transform="translate(-81 -198)"><rect x="81" y="198" width="312" height="253" filter="url(#fz)"/><mask id="mr"><rect x="81" y="198" width="312" height="253" fill="#000"/><g filter="url(#bl)" fill="#fff"><ellipse cx="150" cy="245" rx="60" ry="42" opacity="0.85"/><ellipse cx="90" cy="365" rx="16" ry="50" opacity="0.9"/><ellipse cx="350" cy="320" rx="50" ry="95" opacity="0.75"/></g></mask><rect x="81" y="198" width="312" height="253" filter="url(#fr)" mask="url(#mr)" opacity="0.72"/><clipPath id="cf"><path d="M122 451 C125 430 130 410 137 385 C143 362 152 340 166 320 C178 303 192 288 206 268 C213 250 217 232 222 214 C226 208 232 206 240 207 C250 211 260 220 268 238 C274 252 277 268 277 290 C277 315 277 335 280 350 C290 372 310 392 335 408 C355 420 375 430 393 437 V451 Z"/></clipPath><g clip-path="url(#cf)"><rect x="81" y="198" width="312" height="253" filter="url(#ff)"/></g><path d="M236 205 C248 209 260 220 267 238 C273 252 276 268 276 290 C276 315 276 335 279 350" fill="none" stroke="#a4c878" stroke-width="5" opacity="0.55" clip-path="url(#cf)"/><clipPath id="ci"><path d="M276 350 C284 360 291 376 288 394 C282 388 277 372 274 356 Z"/></clipPath><rect x="270" y="345" width="25" height="55" filter="url(#fr)" clip-path="url(#ci)"/><path d="M240 205 C252 210 262 222 270 240 C276 254 280 270 280 292 C280 316 280 336 283 350 C293 372 313 392 338 408 C358 420 378 430 393 437" fill="none" stroke="#124e46" stroke-width="3.2"/><path d="M242 207 C252 211 260 218 266 228" fill="none" stroke="#40d0d0" stroke-width="4"/><path d="M300 384 C322 402 350 420 393 438" fill="none" stroke="#48d8dc" stroke-width="3"/><path d="M222 198 C219 212 216 228 211 244 C206 262 200 276 190 288 C180 300 170 312 162 326 C152 344 144 364 137 385 C131 405 126 428 123 451" fill="none" stroke="#1a6e68" stroke-width="7" transform="translate(1 0)"/><path d="M222 198 C219 212 216 228 211 244 C206 262 200 276 190 288 C180 300 170 312 162 326 C152 344 144 364 137 385 C131 405 126 428 123 451" fill="none" stroke="#38d4d4" stroke-width="4.5" transform="translate(-1.5 0)"/><path d="M213 198 H232 C228 204 224 210 221 216 L215 232 L212 226 Z" fill="#3cd4d4"/><path d="M81 238 C92 250 104 266 122 284 C135 296 150 306 166 318" fill="none" stroke="#3ad0d0" stroke-width="2.4"/><path d="M113 299 L122 287 M113 299 L128 304" fill="none" stroke="#7ce4e4" stroke-width="1.6"/><path d="M81 430 L130 426" fill="none" stroke="#3a8a70" stroke-width="1" opacity="0.6"/><circle cx="239.5" cy="244.5" r="1.8" fill="#000"/><rect x="240" y="239.5" width="8" height="5" rx="2" fill="#f4f4f4" opacity="0.8"/><path d="M241.8 240.5 v3 M245.5 240.5 v3" stroke="#333" stroke-width="0.8"/><circle cx="203.5" cy="282.5" r="1.8" fill="#000"/><rect x="204" y="277.5" width="8" height="5" rx="2" fill="#f4f4f4" opacity="0.8"/><path d="M205.8 278.5 v3 M209.5 278.5 v3" stroke="#333" stroke-width="0.8"/><circle cx="240.5" cy="282.5" r="1.8" fill="#000"/><rect x="241" y="277.5" width="8" height="5" rx="2" fill="#f4f4f4" opacity="0.8"/><path d="M242.8 278.5 v3 M246.5 278.5 v3" stroke="#333" stroke-width="0.8"/><circle cx="203.5" cy="320.5" r="1.8" fill="#000"/><rect x="204" y="315.5" width="8" height="5" rx="2" fill="#f4f4f4" opacity="0.8"/><path d="M205.8 316.5 v3 M209.5 316.5 v3" stroke="#333" stroke-width="0.8"/><circle cx="240.5" cy="320.5" r="1.8" fill="#000"/><rect x="241" y="315.5" width="8" height="5" rx="2" fill="#f4f4f4" opacity="0.8"/><path d="M242.8 316.5 v3 M246.5 316.5 v3" stroke="#333" stroke-width="0.8"/><circle cx="164.5" cy="359.5" r="1.8" fill="#000"/><rect x="165" y="354.5" width="8" height="5" rx="2" fill="#f4f4f4" opacity="0.8"/><path d="M166.8 355.5 v3 M170.5 355.5 v3" stroke="#333" stroke-width="0.8"/><circle cx="203.5" cy="359.5" r="1.8" fill="#000"/><rect x="204" y="354.5" width="8" height="5" rx="2" fill="#f4f4f4" opacity="0.8"/><path d="M205.8 355.5 v3 M209.5 355.5 v3" stroke="#333" stroke-width="0.8"/><circle cx="240.5" cy="359.5" r="1.8" fill="#000"/><rect x="241" y="354.5" width="8" height="5" rx="2" fill="#f4f4f4" opacity="0.8"/><path d="M242.8 355.5 v3 M246.5 355.5 v3" stroke="#333" stroke-width="0.8"/><circle cx="280.5" cy="359.5" r="1.8" fill="#000"/><rect x="281" y="354.5" width="8" height="5" rx="2" fill="#f4f4f4" opacity="0.8"/><path d="M282.8 355.5 v3 M286.5 355.5 v3" stroke="#333" stroke-width="0.8"/><circle cx="164.5" cy="397.5" r="1.8" fill="#000"/><rect x="165" y="392.5" width="8" height="5" rx="2" fill="#f4f4f4" opacity="0.8"/><path d="M166.8 393.5 v3 M170.5 393.5 v3" stroke="#333" stroke-width="0.8"/><circle cx="203.5" cy="397.5" r="1.8" fill="#000"/><rect x="204" y="392.5" width="8" height="5" rx="2" fill="#f4f4f4" opacity="0.8"/><path d="M205.8 393.5 v3 M209.5 393.5 v3" stroke="#333" stroke-width="0.8"/><circle cx="240.5" cy="397.5" r="1.8" fill="#000"/><rect x="241" y="392.5" width="8" height="5" rx="2" fill="#f4f4f4" opacity="0.8"/><path d="M242.8 393.5 v3 M246.5 393.5 v3" stroke="#333" stroke-width="0.8"/><circle cx="280.5" cy="397.5" r="1.8" fill="#000"/><rect x="281" y="392.5" width="8" height="5" rx="2" fill="#f4f4f4" opacity="0.8"/><path d="M282.8 393.5 v3 M286.5 393.5 v3" stroke="#333" stroke-width="0.8"/><circle cx="319.5" cy="397.5" r="1.8" fill="#000"/><rect x="320" y="392.5" width="8" height="5" rx="2" fill="#f4f4f4" opacity="0.8"/><path d="M321.8 393.5 v3 M325.5 393.5 v3" stroke="#333" stroke-width="0.8"/><circle cx="164.5" cy="436.5" r="1.8" fill="#000"/><rect x="165" y="431.5" width="8" height="5" rx="2" fill="#f4f4f4" opacity="0.8"/><path d="M166.8 432.5 v3 M170.5 432.5 v3" stroke="#333" stroke-width="0.8"/><circle cx="203.5" cy="436.5" r="1.8" fill="#000"/><rect x="204" y="431.5" width="8" height="5" rx="2" fill="#f4f4f4" opacity="0.8"/><path d="M205.8 432.5 v3 M209.5 432.5 v3" stroke="#333" stroke-width="0.8"/><circle cx="240.5" cy="436.5" r="1.8" fill="#000"/><rect x="241" y="431.5" width="8" height="5" rx="2" fill="#f4f4f4" opacity="0.8"/><path d="M242.8 432.5 v3 M246.5 432.5 v3" stroke="#333" stroke-width="0.8"/><circle cx="280.5" cy="436.5" r="1.8" fill="#000"/><rect x="281" y="431.5" width="8" height="5" rx="2" fill="#f4f4f4" opacity="0.8"/><path d="M282.8 432.5 v3 M286.5 432.5 v3" stroke="#333" stroke-width="0.8"/><circle cx="319.5" cy="436.5" r="1.8" fill="#000"/><rect x="320" y="431.5" width="8" height="5" rx="2" fill="#f4f4f4" opacity="0.8"/><path d="M321.8 432.5 v3 M325.5 432.5 v3" stroke="#333" stroke-width="0.8"/><circle cx="357.5" cy="436.5" r="1.8" fill="#000"/><rect x="358" y="431.5" width="8" height="5" rx="2" fill="#f4f4f4" opacity="0.8"/><path d="M359.8 432.5 v3 M363.5 432.5 v3" stroke="#333" stroke-width="0.8"/></g></svg>
<svg style="position:absolute;left:45px;top:164px;" width="461" height="328" viewBox="0 0 461 328"><g transform="translate(-45 -164)" shape-rendering="crispEdges"><path d="M46 166h3v1h-3zM47 165h1v3h-1z" fill="#d2d2d2"/><path d="M46 181h3v1h-3zM47 180h1v3h-1z" fill="#d2d2d2"/><path d="M46 197h3v1h-3zM47 196h1v3h-1z" fill="#d2d2d2"/><path d="M46 212h3v1h-3zM47 211h1v3h-1z" fill="#d2d2d2"/><path d="M46 227h3v1h-3zM47 226h1v3h-1z" fill="#d2d2d2"/><path d="M46 243h3v1h-3zM47 242h1v3h-1z" fill="#d2d2d2"/><path d="M46 258h3v1h-3zM47 257h1v3h-1z" fill="#d2d2d2"/><path d="M46 274h3v1h-3zM47 273h1v3h-1z" fill="#d2d2d2"/><path d="M46 289h3v1h-3zM47 288h1v3h-1z" fill="#d2d2d2"/><path d="M46 304h3v1h-3zM47 303h1v3h-1z" fill="#d2d2d2"/><path d="M46 320h3v1h-3zM47 319h1v3h-1z" fill="#d2d2d2"/><path d="M46 335h3v1h-3zM47 334h1v3h-1z" fill="#d2d2d2"/><path d="M46 350h3v1h-3zM47 349h1v3h-1z" fill="#d2d2d2"/><path d="M46 366h3v1h-3zM47 365h1v3h-1z" fill="#d2d2d2"/><path d="M46 381h3v1h-3zM47 380h1v3h-1z" fill="#d2d2d2"/><path d="M46 396h3v1h-3zM47 395h1v3h-1z" fill="#d2d2d2"/><path d="M46 412h3v1h-3zM47 411h1v3h-1z" fill="#d2d2d2"/><path d="M46 427h3v1h-3zM47 426h1v3h-1z" fill="#d2d2d2"/><path d="M46 442h3v1h-3zM47 441h1v3h-1z" fill="#d2d2d2"/><path d="M46 458h3v1h-3zM47 457h1v3h-1z" fill="#d2d2d2"/><path d="M46 473h3v1h-3zM47 472h1v3h-1z" fill="#d2d2d2"/><path d="M46 489h3v1h-3zM47 488h1v3h-1z" fill="#d2d2d2"/><path d="M61 166h3v1h-3zM62 165h1v3h-1z" fill="#d2d2d2"/><path d="M61 181h3v1h-3zM62 180h1v3h-1z" fill="#d2d2d2"/><path d="M61 197h3v1h-3zM62 196h1v3h-1z" fill="#d2d2d2"/><path d="M61 212h3v1h-3zM62 211h1v3h-1z" fill="#d2d2d2"/><path d="M61 227h3v1h-3zM62 226h1v3h-1z" fill="#d2d2d2"/><path d="M61 243h3v1h-3zM62 242h1v3h-1z" fill="#d2d2d2"/><path d="M61 258h3v1h-3zM62 257h1v3h-1z" fill="#d2d2d2"/><path d="M61 274h3v1h-3zM62 273h1v3h-1z" fill="#d2d2d2"/><path d="M61 289h3v1h-3zM62 288h1v3h-1z" fill="#d2d2d2"/><path d="M61 304h3v1h-3zM62 303h1v3h-1z" fill="#d2d2d2"/><path d="M61 320h3v1h-3zM62 319h1v3h-1z" fill="#d2d2d2"/><path d="M61 335h3v1h-3zM62 334h1v3h-1z" fill="#d2d2d2"/><path d="M61 350h3v1h-3zM62 349h1v3h-1z" fill="#d2d2d2"/><path d="M61 366h3v1h-3zM62 365h1v3h-1z" fill="#d2d2d2"/><path d="M61 381h3v1h-3zM62 380h1v3h-1z" fill="#d2d2d2"/><path d="M61 396h3v1h-3zM62 395h1v3h-1z" fill="#d2d2d2"/><path d="M61 412h3v1h-3zM62 411h1v3h-1z" fill="#d2d2d2"/><path d="M61 427h3v1h-3zM62 426h1v3h-1z" fill="#d2d2d2"/><path d="M61 442h3v1h-3zM62 441h1v3h-1z" fill="#d2d2d2"/><path d="M61 458h3v1h-3zM62 457h1v3h-1z" fill="#d2d2d2"/><path d="M61 473h3v1h-3zM62 472h1v3h-1z" fill="#d2d2d2"/><path d="M61 489h3v1h-3zM62 488h1v3h-1z" fill="#d2d2d2"/><path d="M77 166h3v1h-3zM78 165h1v3h-1z" fill="#d2d2d2"/><path d="M77 181h3v1h-3zM78 180h1v3h-1z" fill="#d2d2d2"/><path d="M77 197h3v1h-3zM78 196h1v3h-1z" fill="#d2d2d2"/><path d="M77 212h3v1h-3zM78 211h1v3h-1z" fill="#d2d2d2"/><path d="M77 227h3v1h-3zM78 226h1v3h-1z" fill="#d2d2d2"/><path d="M77 243h3v1h-3zM78 242h1v3h-1z" fill="#d2d2d2"/><path d="M77 258h3v1h-3zM78 257h1v3h-1z" fill="#d2d2d2"/><path d="M77 274h3v1h-3zM78 273h1v3h-1z" fill="#d2d2d2"/><path d="M77 289h3v1h-3zM78 288h1v3h-1z" fill="#d2d2d2"/><path d="M77 304h3v1h-3zM78 303h1v3h-1z" fill="#d2d2d2"/><path d="M77 320h3v1h-3zM78 319h1v3h-1z" fill="#d2d2d2"/><path d="M77 335h3v1h-3zM78 334h1v3h-1z" fill="#d2d2d2"/><path d="M77 350h3v1h-3zM78 349h1v3h-1z" fill="#d2d2d2"/><path d="M77 366h3v1h-3zM78 365h1v3h-1z" fill="#d2d2d2"/><path d="M77 381h3v1h-3zM78 380h1v3h-1z" fill="#d2d2d2"/><path d="M77 396h3v1h-3zM78 395h1v3h-1z" fill="#d2d2d2"/><path d="M77 412h3v1h-3zM78 411h1v3h-1z" fill="#d2d2d2"/><path d="M77 427h3v1h-3zM78 426h1v3h-1z" fill="#d2d2d2"/><path d="M77 442h3v1h-3zM78 441h1v3h-1z" fill="#d2d2d2"/><path d="M77 458h3v1h-3zM78 457h1v3h-1z" fill="#d2d2d2"/><path d="M77 473h3v1h-3zM78 472h1v3h-1z" fill="#d2d2d2"/><path d="M77 489h3v1h-3zM78 488h1v3h-1z" fill="#d2d2d2"/><path d="M92 166h3v1h-3zM93 165h1v3h-1z" fill="#d2d2d2"/><path d="M92 181h3v1h-3zM93 180h1v3h-1z" fill="#d2d2d2"/><path d="M92 197h3v1h-3zM93 196h1v3h-1z" fill="#d2d2d2"/><path d="M92 212h3v1h-3zM93 211h1v3h-1z" fill="#c0c4c8" opacity="0.4"/><path d="M92 227h3v1h-3zM93 226h1v3h-1z" fill="#c0c4c8" opacity="0.4"/><path d="M92 243h3v1h-3zM93 242h1v3h-1z" fill="#c0c4c8" opacity="0.4"/><path d="M92 258h3v1h-3zM93 257h1v3h-1z" fill="#c0c4c8" opacity="0.4"/><path d="M92 274h3v1h-3zM93 273h1v3h-1z" fill="#c0c4c8" opacity="0.4"/><path d="M92 289h3v1h-3zM93 288h1v3h-1z" fill="#c0c4c8" opacity="0.4"/><path d="M92 304h3v1h-3zM93 303h1v3h-1z" fill="#c0c4c8" opacity="0.4"/><path d="M92 320h3v1h-3zM93 319h1v3h-1z" fill="#c0c4c8" opacity="0.4"/><path d="M92 335h3v1h-3zM93 334h1v3h-1z" fill="#c0c4c8" opacity="0.4"/><path d="M92 350h3v1h-3zM93 349h1v3h-1z" fill="#c0c4c8" opacity="0.4"/><path d="M92 366h3v1h-3zM93 365h1v3h-1z" fill="#c0c4c8" opacity="0.4"/><path d="M92 381h3v1h-3zM93 380h1v3h-1z" fill="#c0c4c8" opacity="0.4"/><path d="M92 396h3v1h-3zM93 395h1v3h-1z" fill="#c0c4c8" opacity="0.4"/><path d="M92 412h3v1h-3zM93 411h1v3h-1z" fill="#c0c4c8" opacity="0.4"/><path d="M92 427h3v1h-3zM93 426h1v3h-1z" fill="#c0c4c8" opacity="0.4"/><path d="M92 442h3v1h-3zM93 441h1v3h-1z" fill="#c0c4c8" opacity="0.4"/><path d="M92 458h3v1h-3zM93 457h1v3h-1z" fill="#d2d2d2"/><path d="M92 473h3v1h-3zM93 472h1v3h-1z" fill="#d2d2d2"/><path d="M92 489h3v1h-3zM93 488h1v3h-1z" fill="#d2d2d2"/><path d="M107 166h3v1h-3zM108 165h1v3h-1z" fill="#d2d2d2"/><path d="M107 181h3v1h-3zM108 180h1v3h-1z" fill="#d2d2d2"/><path d="M107 197h3v1h-3zM108 196h1v3h-1z" fill="#d2d2d2"/><path d="M107 212h3v1h-3zM108 211h1v3h-1z" fill="#c0c4c8" opacity="0.4"/><path d="M107 227h3v1h-3zM108 226h1v3h-1z" fill="#c0c4c8" opacity="0.4"/><path d="M107 243h3v1h-3zM108 242h1v3h-1z" fill="#c0c4c8" opacity="0.4"/><path d="M107 258h3v1h-3zM108 257h1v3h-1z" fill="#c0c4c8" opacity="0.4"/><path d="M107 274h3v1h-3zM108 273h1v3h-1z" fill="#c0c4c8" opacity="0.4"/><path d="M107 289h3v1h-3zM108 288h1v3h-1z" fill="#c0c4c8" opacity="0.4"/><path d="M107 304h3v1h-3zM108 303h1v3h-1z" fill="#c0c4c8" opacity="0.4"/><path d="M107 320h3v1h-3zM108 319h1v3h-1z" fill="#c0c4c8" opacity="0.4"/><path d="M107 335h3v1h-3zM108 334h1v3h-1z" fill="#c0c4c8" opacity="0.4"/><path d="M107 350h3v1h-3zM108 349h1v3h-1z" fill="#c0c4c8" opacity="0.4"/><path d="M107 366h3v1h-3zM108 365h1v3h-1z" fill="#c0c4c8" opacity="0.4"/><path d="M107 381h3v1h-3zM108 380h1v3h-1z" fill="#c0c4c8" opacity="0.4"/><path d="M107 396h3v1h-3zM108 395h1v3h-1z" fill="#c0c4c8" opacity="0.4"/><path d="M107 412h3v1h-3zM108 411h1v3h-1z" fill="#c0c4c8" opacity="0.4"/><path d="M107 427h3v1h-3zM108 426h1v3h-1z" fill="#c0c4c8" opacity="0.4"/><path d="M107 442h3v1h-3zM108 441h1v3h-1z" fill="#c0c4c8" opacity="0.4"/><path d="M107 458h3v1h-3zM108 457h1v3h-1z" fill="#d2d2d2"/><path d="M107 473h3v1h-3zM108 472h1v3h-1z" fill="#d2d2d2"/><path d="M107 489h3v1h-3zM108 488h1v3h-1z" fill="#d2d2d2"/><path d="M123 166h3v1h-3zM124 165h1v3h-1z" fill="#d2d2d2"/><path d="M123 181h3v1h-3zM124 180h1v3h-1z" fill="#d2d2d2"/><path d="M123 197h3v1h-3zM124 196h1v3h-1z" fill="#d2d2d2"/><path d="M123 212h3v1h-3zM124 211h1v3h-1z" fill="#c0c4c8" opacity="0.4"/><path d="M123 227h3v1h-3zM124 226h1v3h-1z" fill="#c0c4c8" opacity="0.4"/><path d="M123 243h3v1h-3zM124 242h1v3h-1z" fill="#c0c4c8" opacity="0.4"/><path d="M123 258h3v1h-3zM124 257h1v3h-1z" fill="#c0c4c8" opacity="0.4"/><path d="M123 274h3v1h-3zM124 273h1v3h-1z" fill="#c0c4c8" opacity="0.4"/><path d="M123 289h3v1h-3zM124 288h1v3h-1z" fill="#c0c4c8" opacity="0.4"/><path d="M123 304h3v1h-3zM124 303h1v3h-1z" fill="#c0c4c8" opacity="0.4"/><path d="M123 320h3v1h-3zM124 319h1v3h-1z" fill="#c0c4c8" opacity="0.4"/><path d="M123 335h3v1h-3zM124 334h1v3h-1z" fill="#c0c4c8" opacity="0.4"/><path d="M123 350h3v1h-3zM124 349h1v3h-1z" fill="#c0c4c8" opacity="0.4"/><path d="M123 366h3v1h-3zM124 365h1v3h-1z" fill="#c0c4c8" opacity="0.4"/><path d="M123 381h3v1h-3zM124 380h1v3h-1z" fill="#c0c4c8" opacity="0.4"/><path d="M123 396h3v1h-3zM124 395h1v3h-1z" fill="#c0c4c8" opacity="0.4"/><path d="M123 412h3v1h-3zM124 411h1v3h-1z" fill="#c0c4c8" opacity="0.4"/><path d="M123 427h3v1h-3zM124 426h1v3h-1z" fill="#c0c4c8" opacity="0.4"/><path d="M123 442h3v1h-3zM124 441h1v3h-1z" fill="#c0c4c8" opacity="0.4"/><path d="M123 458h3v1h-3zM124 457h1v3h-1z" fill="#d2d2d2"/><path d="M123 473h3v1h-3zM124 472h1v3h-1z" fill="#d2d2d2"/><path d="M123 489h3v1h-3zM124 488h1v3h-1z" fill="#d2d2d2"/><path d="M138 166h3v1h-3zM139 165h1v3h-1z" fill="#d2d2d2"/><path d="M138 181h3v1h-3zM139 180h1v3h-1z" fill="#d2d2d2"/><path d="M138 197h3v1h-3zM139 196h1v3h-1z" fill="#d2d2d2"/><path d="M138 212h3v1h-3zM139 211h1v3h-1z" fill="#c0c4c8" opacity="0.4"/><path d="M138 227h3v1h-3zM139 226h1v3h-1z" fill="#c0c4c8" opacity="0.4"/><path d="M138 243h3v1h-3zM139 242h1v3h-1z" fill="#c0c4c8" opacity="0.4"/><path d="M138 258h3v1h-3zM139 257h1v3h-1z" fill="#c0c4c8" opacity="0.4"/><path d="M138 274h3v1h-3zM139 273h1v3h-1z" fill="#c0c4c8" opacity="0.4"/><path d="M138 289h3v1h-3zM139 288h1v3h-1z" fill="#c0c4c8" opacity="0.4"/><path d="M138 304h3v1h-3zM139 303h1v3h-1z" fill="#c0c4c8" opacity="0.4"/><path d="M138 320h3v1h-3zM139 319h1v3h-1z" fill="#c0c4c8" opacity="0.4"/><path d="M138 335h3v1h-3zM139 334h1v3h-1z" fill="#c0c4c8" opacity="0.4"/><path d="M138 350h3v1h-3zM139 349h1v3h-1z" fill="#c0c4c8" opacity="0.4"/><path d="M138 366h3v1h-3zM139 365h1v3h-1z" fill="#c0c4c8" opacity="0.4"/><path d="M138 381h3v1h-3zM139 380h1v3h-1z" fill="#c0c4c8" opacity="0.4"/><path d="M138 396h3v1h-3zM139 395h1v3h-1z" fill="#c0c4c8" opacity="0.4"/><path d="M138 412h3v1h-3zM139 411h1v3h-1z" fill="#c0c4c8" opacity="0.4"/><path d="M138 427h3v1h-3zM139 426h1v3h-1z" fill="#c0c4c8" opacity="0.4"/><path d="M138 442h3v1h-3zM139 441h1v3h-1z" fill="#c0c4c8" opacity="0.4"/><path d="M138 458h3v1h-3zM139 457h1v3h-1z" fill="#d2d2d2"/><path d="M138 473h3v1h-3zM139 472h1v3h-1z" fill="#d2d2d2"/><path d="M138 489h3v1h-3zM139 488h1v3h-1z" fill="#d2d2d2"/><path d="M154 166h3v1h-3zM155 165h1v3h-1z" fill="#d2d2d2"/><path d="M154 181h3v1h-3zM155 180h1v3h-1z" fill="#d2d2d2"/><path d="M154 197h3v1h-3zM155 196h1v3h-1z" fill="#d2d2d2"/><path d="M154 212h3v1h-3zM155 211h1v3h-1z" fill="#c0c4c8" opacity="0.4"/><path d="M154 227h3v1h-3zM155 226h1v3h-1z" fill="#c0c4c8" opacity="0.4"/><path d="M154 243h3v1h-3zM155 242h1v3h-1z" fill="#c0c4c8" opacity="0.4"/><path d="M154 258h3v1h-3zM155 257h1v3h-1z" fill="#c0c4c8" opacity="0.4"/><path d="M154 274h3v1h-3zM155 273h1v3h-1z" fill="#c0c4c8" opacity="0.4"/><path d="M154 289h3v1h-3zM155 288h1v3h-1z" fill="#c0c4c8" opacity="0.4"/><path d="M154 304h3v1h-3zM155 303h1v3h-1z" fill="#c0c4c8" opacity="0.4"/><path d="M154 320h3v1h-3zM155 319h1v3h-1z" fill="#c0c4c8" opacity="0.4"/><path d="M154 335h3v1h-3zM155 334h1v3h-1z" fill="#c0c4c8" opacity="0.4"/><path d="M154 350h3v1h-3zM155 349h1v3h-1z" fill="#c0c4c8" opacity="0.4"/><path d="M154 366h3v1h-3zM155 365h1v3h-1z" fill="#c0c4c8" opacity="0.4"/><path d="M154 381h3v1h-3zM155 380h1v3h-1z" fill="#c0c4c8" opacity="0.4"/><path d="M154 396h3v1h-3zM155 395h1v3h-1z" fill="#c0c4c8" opacity="0.4"/><path d="M154 412h3v1h-3zM155 411h1v3h-1z" fill="#c0c4c8" opacity="0.4"/><path d="M154 427h3v1h-3zM155 426h1v3h-1z" fill="#c0c4c8" opacity="0.4"/><path d="M154 442h3v1h-3zM155 441h1v3h-1z" fill="#c0c4c8" opacity="0.4"/><path d="M154 458h3v1h-3zM155 457h1v3h-1z" fill="#d2d2d2"/><path d="M154 473h3v1h-3zM155 472h1v3h-1z" fill="#d2d2d2"/><path d="M154 489h3v1h-3zM155 488h1v3h-1z" fill="#d2d2d2"/><path d="M169 166h3v1h-3zM170 165h1v3h-1z" fill="#d2d2d2"/><path d="M169 181h3v1h-3zM170 180h1v3h-1z" fill="#d2d2d2"/><path d="M169 197h3v1h-3zM170 196h1v3h-1z" fill="#d2d2d2"/><path d="M169 212h3v1h-3zM170 211h1v3h-1z" fill="#c0c4c8" opacity="0.4"/><path d="M169 227h3v1h-3zM170 226h1v3h-1z" fill="#c0c4c8" opacity="0.4"/><path d="M169 243h3v1h-3zM170 242h1v3h-1z" fill="#c0c4c8" opacity="0.4"/><path d="M169 258h3v1h-3zM170 257h1v3h-1z" fill="#c0c4c8" opacity="0.4"/><path d="M169 274h3v1h-3zM170 273h1v3h-1z" fill="#c0c4c8" opacity="0.4"/><path d="M169 289h3v1h-3zM170 288h1v3h-1z" fill="#c0c4c8" opacity="0.4"/><path d="M169 304h3v1h-3zM170 303h1v3h-1z" fill="#c0c4c8" opacity="0.4"/><path d="M169 320h3v1h-3zM170 319h1v3h-1z" fill="#c0c4c8" opacity="0.4"/><path d="M169 335h3v1h-3zM170 334h1v3h-1z" fill="#c0c4c8" opacity="0.4"/><path d="M169 350h3v1h-3zM170 349h1v3h-1z" fill="#c0c4c8" opacity="0.4"/><path d="M169 366h3v1h-3zM170 365h1v3h-1z" fill="#c0c4c8" opacity="0.4"/><path d="M169 381h3v1h-3zM170 380h1v3h-1z" fill="#c0c4c8" opacity="0.4"/><path d="M169 396h3v1h-3zM170 395h1v3h-1z" fill="#c0c4c8" opacity="0.4"/><path d="M169 412h3v1h-3zM170 411h1v3h-1z" fill="#c0c4c8" opacity="0.4"/><path d="M169 427h3v1h-3zM170 426h1v3h-1z" fill="#c0c4c8" opacity="0.4"/><path d="M169 442h3v1h-3zM170 441h1v3h-1z" fill="#c0c4c8" opacity="0.4"/><path d="M169 458h3v1h-3zM170 457h1v3h-1z" fill="#d2d2d2"/><path d="M169 473h3v1h-3zM170 472h1v3h-1z" fill="#d2d2d2"/><path d="M169 489h3v1h-3zM170 488h1v3h-1z" fill="#d2d2d2"/><path d="M184 166h3v1h-3zM185 165h1v3h-1z" fill="#d2d2d2"/><path d="M184 181h3v1h-3zM185 180h1v3h-1z" fill="#d2d2d2"/><path d="M184 197h3v1h-3zM185 196h1v3h-1z" fill="#d2d2d2"/><path d="M184 212h3v1h-3zM185 211h1v3h-1z" fill="#c0c4c8" opacity="0.4"/><path d="M184 227h3v1h-3zM185 226h1v3h-1z" fill="#c0c4c8" opacity="0.4"/><path d="M184 243h3v1h-3zM185 242h1v3h-1z" fill="#c0c4c8" opacity="0.4"/><path d="M184 258h3v1h-3zM185 257h1v3h-1z" fill="#c0c4c8" opacity="0.4"/><path d="M184 274h3v1h-3zM185 273h1v3h-1z" fill="#c0c4c8" opacity="0.4"/><path d="M184 289h3v1h-3zM185 288h1v3h-1z" fill="#c0c4c8" opacity="0.4"/><path d="M184 304h3v1h-3zM185 303h1v3h-1z" fill="#c0c4c8" opacity="0.4"/><path d="M184 320h3v1h-3zM185 319h1v3h-1z" fill="#c0c4c8" opacity="0.4"/><path d="M184 335h3v1h-3zM185 334h1v3h-1z" fill="#c0c4c8" opacity="0.4"/><path d="M184 350h3v1h-3zM185 349h1v3h-1z" fill="#c0c4c8" opacity="0.4"/><path d="M184 366h3v1h-3zM185 365h1v3h-1z" fill="#c0c4c8" opacity="0.4"/><path d="M184 381h3v1h-3zM185 380h1v3h-1z" fill="#c0c4c8" opacity="0.4"/><path d="M184 396h3v1h-3zM185 395h1v3h-1z" fill="#c0c4c8" opacity="0.4"/><path d="M184 412h3v1h-3zM185 411h1v3h-1z" fill="#c0c4c8" opacity="0.4"/><path d="M184 427h3v1h-3zM185 426h1v3h-1z" fill="#c0c4c8" opacity="0.4"/><path d="M184 442h3v1h-3zM185 441h1v3h-1z" fill="#c0c4c8" opacity="0.4"/><path d="M184 458h3v1h-3zM185 457h1v3h-1z" fill="#d2d2d2"/><path d="M184 473h3v1h-3zM185 472h1v3h-1z" fill="#d2d2d2"/><path d="M184 489h3v1h-3zM185 488h1v3h-1z" fill="#d2d2d2"/><path d="M200 166h3v1h-3zM201 165h1v3h-1z" fill="#d2d2d2"/><path d="M200 181h3v1h-3zM201 180h1v3h-1z" fill="#d2d2d2"/><path d="M200 197h3v1h-3zM201 196h1v3h-1z" fill="#d2d2d2"/><path d="M200 212h3v1h-3zM201 211h1v3h-1z" fill="#c0c4c8" opacity="0.4"/><path d="M200 227h3v1h-3zM201 226h1v3h-1z" fill="#c0c4c8" opacity="0.4"/><path d="M200 243h3v1h-3zM201 242h1v3h-1z" fill="#c0c4c8" opacity="0.4"/><path d="M200 258h3v1h-3zM201 257h1v3h-1z" fill="#c0c4c8" opacity="0.4"/><path d="M200 274h3v1h-3zM201 273h1v3h-1z" fill="#c0c4c8" opacity="0.4"/><path d="M200 289h3v1h-3zM201 288h1v3h-1z" fill="#c0c4c8" opacity="0.4"/><path d="M200 304h3v1h-3zM201 303h1v3h-1z" fill="#c0c4c8" opacity="0.4"/><path d="M200 320h3v1h-3zM201 319h1v3h-1z" fill="#c0c4c8" opacity="0.4"/><path d="M200 335h3v1h-3zM201 334h1v3h-1z" fill="#c0c4c8" opacity="0.4"/><path d="M200 350h3v1h-3zM201 349h1v3h-1z" fill="#c0c4c8" opacity="0.4"/><path d="M200 366h3v1h-3zM201 365h1v3h-1z" fill="#c0c4c8" opacity="0.4"/><path d="M200 381h3v1h-3zM201 380h1v3h-1z" fill="#c0c4c8" opacity="0.4"/><path d="M200 396h3v1h-3zM201 395h1v3h-1z" fill="#c0c4c8" opacity="0.4"/><path d="M200 412h3v1h-3zM201 411h1v3h-1z" fill="#c0c4c8" opacity="0.4"/><path d="M200 427h3v1h-3zM201 426h1v3h-1z" fill="#c0c4c8" opacity="0.4"/><path d="M200 442h3v1h-3zM201 441h1v3h-1z" fill="#c0c4c8" opacity="0.4"/><path d="M200 458h3v1h-3zM201 457h1v3h-1z" fill="#d2d2d2"/><path d="M200 473h3v1h-3zM201 472h1v3h-1z" fill="#d2d2d2"/><path d="M200 489h3v1h-3zM201 488h1v3h-1z" fill="#d2d2d2"/><path d="M215 166h3v1h-3zM216 165h1v3h-1z" fill="#d2d2d2"/><path d="M215 181h3v1h-3zM216 180h1v3h-1z" fill="#d2d2d2"/><path d="M215 197h3v1h-3zM216 196h1v3h-1z" fill="#d2d2d2"/><path d="M215 212h3v1h-3zM216 211h1v3h-1z" fill="#c0c4c8" opacity="0.4"/><path d="M215 227h3v1h-3zM216 226h1v3h-1z" fill="#c0c4c8" opacity="0.4"/><path d="M215 243h3v1h-3zM216 242h1v3h-1z" fill="#c0c4c8" opacity="0.4"/><path d="M215 258h3v1h-3zM216 257h1v3h-1z" fill="#c0c4c8" opacity="0.4"/><path d="M215 274h3v1h-3zM216 273h1v3h-1z" fill="#c0c4c8" opacity="0.4"/><path d="M215 289h3v1h-3zM216 288h1v3h-1z" fill="#c0c4c8" opacity="0.4"/><path d="M215 304h3v1h-3zM216 303h1v3h-1z" fill="#c0c4c8" opacity="0.4"/><path d="M215 320h3v1h-3zM216 319h1v3h-1z" fill="#c0c4c8" opacity="0.4"/><path d="M215 335h3v1h-3zM216 334h1v3h-1z" fill="#c0c4c8" opacity="0.4"/><path d="M215 350h3v1h-3zM216 349h1v3h-1z" fill="#c0c4c8" opacity="0.4"/><path d="M215 366h3v1h-3zM216 365h1v3h-1z" fill="#c0c4c8" opacity="0.4"/><path d="M215 381h3v1h-3zM216 380h1v3h-1z" fill="#c0c4c8" opacity="0.4"/><path d="M215 396h3v1h-3zM216 395h1v3h-1z" fill="#c0c4c8" opacity="0.4"/><path d="M215 412h3v1h-3zM216 411h1v3h-1z" fill="#c0c4c8" opacity="0.4"/><path d="M215 427h3v1h-3zM216 426h1v3h-1z" fill="#c0c4c8" opacity="0.4"/><path d="M215 442h3v1h-3zM216 441h1v3h-1z" fill="#c0c4c8" opacity="0.4"/><path d="M215 458h3v1h-3zM216 457h1v3h-1z" fill="#d2d2d2"/><path d="M215 473h3v1h-3zM216 472h1v3h-1z" fill="#d2d2d2"/><path d="M215 489h3v1h-3zM216 488h1v3h-1z" fill="#d2d2d2"/><path d="M230 166h3v1h-3zM231 165h1v3h-1z" fill="#d2d2d2"/><path d="M230 181h3v1h-3zM231 180h1v3h-1z" fill="#d2d2d2"/><path d="M230 197h3v1h-3zM231 196h1v3h-1z" fill="#d2d2d2"/><path d="M230 212h3v1h-3zM231 211h1v3h-1z" fill="#c0c4c8" opacity="0.4"/><path d="M230 227h3v1h-3zM231 226h1v3h-1z" fill="#c0c4c8" opacity="0.4"/><path d="M230 243h3v1h-3zM231 242h1v3h-1z" fill="#c0c4c8" opacity="0.4"/><path d="M230 258h3v1h-3zM231 257h1v3h-1z" fill="#c0c4c8" opacity="0.4"/><path d="M230 274h3v1h-3zM231 273h1v3h-1z" fill="#c0c4c8" opacity="0.4"/><path d="M230 289h3v1h-3zM231 288h1v3h-1z" fill="#c0c4c8" opacity="0.4"/><path d="M230 304h3v1h-3zM231 303h1v3h-1z" fill="#c0c4c8" opacity="0.4"/><path d="M230 320h3v1h-3zM231 319h1v3h-1z" fill="#c0c4c8" opacity="0.4"/><path d="M230 335h3v1h-3zM231 334h1v3h-1z" fill="#c0c4c8" opacity="0.4"/><path d="M230 350h3v1h-3zM231 349h1v3h-1z" fill="#c0c4c8" opacity="0.4"/><path d="M230 366h3v1h-3zM231 365h1v3h-1z" fill="#c0c4c8" opacity="0.4"/><path d="M230 381h3v1h-3zM231 380h1v3h-1z" fill="#c0c4c8" opacity="0.4"/><path d="M230 396h3v1h-3zM231 395h1v3h-1z" fill="#c0c4c8" opacity="0.4"/><path d="M230 412h3v1h-3zM231 411h1v3h-1z" fill="#c0c4c8" opacity="0.4"/><path d="M230 427h3v1h-3zM231 426h1v3h-1z" fill="#c0c4c8" opacity="0.4"/><path d="M230 442h3v1h-3zM231 441h1v3h-1z" fill="#c0c4c8" opacity="0.4"/><path d="M230 458h3v1h-3zM231 457h1v3h-1z" fill="#d2d2d2"/><path d="M230 473h3v1h-3zM231 472h1v3h-1z" fill="#d2d2d2"/><path d="M230 489h3v1h-3zM231 488h1v3h-1z" fill="#d2d2d2"/><path d="M246 166h3v1h-3zM247 165h1v3h-1z" fill="#d2d2d2"/><path d="M246 181h3v1h-3zM247 180h1v3h-1z" fill="#d2d2d2"/><path d="M246 197h3v1h-3zM247 196h1v3h-1z" fill="#d2d2d2"/><path d="M246 212h3v1h-3zM247 211h1v3h-1z" fill="#c0c4c8" opacity="0.4"/><path d="M246 227h3v1h-3zM247 226h1v3h-1z" fill="#c0c4c8" opacity="0.4"/><path d="M246 243h3v1h-3zM247 242h1v3h-1z" fill="#c0c4c8" opacity="0.4"/><path d="M246 258h3v1h-3zM247 257h1v3h-1z" fill="#c0c4c8" opacity="0.4"/><path d="M246 274h3v1h-3zM247 273h1v3h-1z" fill="#c0c4c8" opacity="0.4"/><path d="M246 289h3v1h-3zM247 288h1v3h-1z" fill="#c0c4c8" opacity="0.4"/><path d="M246 304h3v1h-3zM247 303h1v3h-1z" fill="#c0c4c8" opacity="0.4"/><path d="M246 320h3v1h-3zM247 319h1v3h-1z" fill="#c0c4c8" opacity="0.4"/><path d="M246 335h3v1h-3zM247 334h1v3h-1z" fill="#c0c4c8" opacity="0.4"/><path d="M246 350h3v1h-3zM247 349h1v3h-1z" fill="#c0c4c8" opacity="0.4"/><path d="M246 366h3v1h-3zM247 365h1v3h-1z" fill="#c0c4c8" opacity="0.4"/><path d="M246 381h3v1h-3zM247 380h1v3h-1z" fill="#c0c4c8" opacity="0.4"/><path d="M246 396h3v1h-3zM247 395h1v3h-1z" fill="#c0c4c8" opacity="0.4"/><path d="M246 412h3v1h-3zM247 411h1v3h-1z" fill="#c0c4c8" opacity="0.4"/><path d="M246 427h3v1h-3zM247 426h1v3h-1z" fill="#c0c4c8" opacity="0.4"/><path d="M246 442h3v1h-3zM247 441h1v3h-1z" fill="#c0c4c8" opacity="0.4"/><path d="M246 458h3v1h-3zM247 457h1v3h-1z" fill="#d2d2d2"/><path d="M246 473h3v1h-3zM247 472h1v3h-1z" fill="#d2d2d2"/><path d="M246 489h3v1h-3zM247 488h1v3h-1z" fill="#d2d2d2"/><path d="M261 166h3v1h-3zM262 165h1v3h-1z" fill="#d2d2d2"/><path d="M261 181h3v1h-3zM262 180h1v3h-1z" fill="#d2d2d2"/><path d="M261 197h3v1h-3zM262 196h1v3h-1z" fill="#d2d2d2"/><path d="M261 212h3v1h-3zM262 211h1v3h-1z" fill="#c0c4c8" opacity="0.4"/><path d="M261 227h3v1h-3zM262 226h1v3h-1z" fill="#c0c4c8" opacity="0.4"/><path d="M261 243h3v1h-3zM262 242h1v3h-1z" fill="#c0c4c8" opacity="0.4"/><path d="M261 258h3v1h-3zM262 257h1v3h-1z" fill="#c0c4c8" opacity="0.4"/><path d="M261 274h3v1h-3zM262 273h1v3h-1z" fill="#c0c4c8" opacity="0.4"/><path d="M261 289h3v1h-3zM262 288h1v3h-1z" fill="#c0c4c8" opacity="0.4"/><path d="M261 304h3v1h-3zM262 303h1v3h-1z" fill="#c0c4c8" opacity="0.4"/><path d="M261 320h3v1h-3zM262 319h1v3h-1z" fill="#c0c4c8" opacity="0.4"/><path d="M261 335h3v1h-3zM262 334h1v3h-1z" fill="#c0c4c8" opacity="0.4"/><path d="M261 350h3v1h-3zM262 349h1v3h-1z" fill="#c0c4c8" opacity="0.4"/><path d="M261 366h3v1h-3zM262 365h1v3h-1z" fill="#c0c4c8" opacity="0.4"/><path d="M261 381h3v1h-3zM262 380h1v3h-1z" fill="#c0c4c8" opacity="0.4"/><path d="M261 396h3v1h-3zM262 395h1v3h-1z" fill="#c0c4c8" opacity="0.4"/><path d="M261 412h3v1h-3zM262 411h1v3h-1z" fill="#c0c4c8" opacity="0.4"/><path d="M261 427h3v1h-3zM262 426h1v3h-1z" fill="#c0c4c8" opacity="0.4"/><path d="M261 442h3v1h-3zM262 441h1v3h-1z" fill="#c0c4c8" opacity="0.4"/><path d="M261 458h3v1h-3zM262 457h1v3h-1z" fill="#d2d2d2"/><path d="M261 473h3v1h-3zM262 472h1v3h-1z" fill="#d2d2d2"/><path d="M261 489h3v1h-3zM262 488h1v3h-1z" fill="#d2d2d2"/><path d="M276 166h3v1h-3zM277 165h1v3h-1z" fill="#d2d2d2"/><path d="M276 181h3v1h-3zM277 180h1v3h-1z" fill="#d2d2d2"/><path d="M276 197h3v1h-3zM277 196h1v3h-1z" fill="#d2d2d2"/><path d="M276 212h3v1h-3zM277 211h1v3h-1z" fill="#c0c4c8" opacity="0.4"/><path d="M276 227h3v1h-3zM277 226h1v3h-1z" fill="#c0c4c8" opacity="0.4"/><path d="M276 243h3v1h-3zM277 242h1v3h-1z" fill="#c0c4c8" opacity="0.4"/><path d="M276 258h3v1h-3zM277 257h1v3h-1z" fill="#c0c4c8" opacity="0.4"/><path d="M276 274h3v1h-3zM277 273h1v3h-1z" fill="#c0c4c8" opacity="0.4"/><path d="M276 289h3v1h-3zM277 288h1v3h-1z" fill="#c0c4c8" opacity="0.4"/><path d="M276 304h3v1h-3zM277 303h1v3h-1z" fill="#c0c4c8" opacity="0.4"/><path d="M276 320h3v1h-3zM277 319h1v3h-1z" fill="#c0c4c8" opacity="0.4"/><path d="M276 335h3v1h-3zM277 334h1v3h-1z" fill="#c0c4c8" opacity="0.4"/><path d="M276 350h3v1h-3zM277 349h1v3h-1z" fill="#c0c4c8" opacity="0.4"/><path d="M276 366h3v1h-3zM277 365h1v3h-1z" fill="#c0c4c8" opacity="0.4"/><path d="M276 381h3v1h-3zM277 380h1v3h-1z" fill="#c0c4c8" opacity="0.4"/><path d="M276 396h3v1h-3zM277 395h1v3h-1z" fill="#c0c4c8" opacity="0.4"/><path d="M276 412h3v1h-3zM277 411h1v3h-1z" fill="#c0c4c8" opacity="0.4"/><path d="M276 427h3v1h-3zM277 426h1v3h-1z" fill="#c0c4c8" opacity="0.4"/><path d="M276 442h3v1h-3zM277 441h1v3h-1z" fill="#c0c4c8" opacity="0.4"/><path d="M276 458h3v1h-3zM277 457h1v3h-1z" fill="#d2d2d2"/><path d="M276 473h3v1h-3zM277 472h1v3h-1z" fill="#d2d2d2"/><path d="M276 489h3v1h-3zM277 488h1v3h-1z" fill="#d2d2d2"/><path d="M292 166h3v1h-3zM293 165h1v3h-1z" fill="#d2d2d2"/><path d="M292 181h3v1h-3zM293 180h1v3h-1z" fill="#d2d2d2"/><path d="M292 197h3v1h-3zM293 196h1v3h-1z" fill="#d2d2d2"/><path d="M292 212h3v1h-3zM293 211h1v3h-1z" fill="#c0c4c8" opacity="0.4"/><path d="M292 227h3v1h-3zM293 226h1v3h-1z" fill="#c0c4c8" opacity="0.4"/><path d="M292 243h3v1h-3zM293 242h1v3h-1z" fill="#c0c4c8" opacity="0.4"/><path d="M292 258h3v1h-3zM293 257h1v3h-1z" fill="#c0c4c8" opacity="0.4"/><path d="M292 274h3v1h-3zM293 273h1v3h-1z" fill="#c0c4c8" opacity="0.4"/><path d="M292 289h3v1h-3zM293 288h1v3h-1z" fill="#c0c4c8" opacity="0.4"/><path d="M292 304h3v1h-3zM293 303h1v3h-1z" fill="#c0c4c8" opacity="0.4"/><path d="M292 320h3v1h-3zM293 319h1v3h-1z" fill="#c0c4c8" opacity="0.4"/><path d="M292 335h3v1h-3zM293 334h1v3h-1z" fill="#c0c4c8" opacity="0.4"/><path d="M292 350h3v1h-3zM293 349h1v3h-1z" fill="#c0c4c8" opacity="0.4"/><path d="M292 366h3v1h-3zM293 365h1v3h-1z" fill="#c0c4c8" opacity="0.4"/><path d="M292 381h3v1h-3zM293 380h1v3h-1z" fill="#c0c4c8" opacity="0.4"/><path d="M292 396h3v1h-3zM293 395h1v3h-1z" fill="#c0c4c8" opacity="0.4"/><path d="M292 412h3v1h-3zM293 411h1v3h-1z" fill="#c0c4c8" opacity="0.4"/><path d="M292 427h3v1h-3zM293 426h1v3h-1z" fill="#c0c4c8" opacity="0.4"/><path d="M292 442h3v1h-3zM293 441h1v3h-1z" fill="#c0c4c8" opacity="0.4"/><path d="M292 458h3v1h-3zM293 457h1v3h-1z" fill="#d2d2d2"/><path d="M292 473h3v1h-3zM293 472h1v3h-1z" fill="#d2d2d2"/><path d="M292 489h3v1h-3zM293 488h1v3h-1z" fill="#d2d2d2"/><path d="M307 166h3v1h-3zM308 165h1v3h-1z" fill="#d2d2d2"/><path d="M307 181h3v1h-3zM308 180h1v3h-1z" fill="#d2d2d2"/><path d="M307 197h3v1h-3zM308 196h1v3h-1z" fill="#d2d2d2"/><path d="M307 212h3v1h-3zM308 211h1v3h-1z" fill="#c0c4c8" opacity="0.4"/><path d="M307 227h3v1h-3zM308 226h1v3h-1z" fill="#c0c4c8" opacity="0.4"/><path d="M307 243h3v1h-3zM308 242h1v3h-1z" fill="#c0c4c8" opacity="0.4"/><path d="M307 258h3v1h-3zM308 257h1v3h-1z" fill="#c0c4c8" opacity="0.4"/><path d="M307 274h3v1h-3zM308 273h1v3h-1z" fill="#c0c4c8" opacity="0.4"/><path d="M307 289h3v1h-3zM308 288h1v3h-1z" fill="#c0c4c8" opacity="0.4"/><path d="M307 304h3v1h-3zM308 303h1v3h-1z" fill="#c0c4c8" opacity="0.4"/><path d="M307 320h3v1h-3zM308 319h1v3h-1z" fill="#c0c4c8" opacity="0.4"/><path d="M307 335h3v1h-3zM308 334h1v3h-1z" fill="#c0c4c8" opacity="0.4"/><path d="M307 350h3v1h-3zM308 349h1v3h-1z" fill="#c0c4c8" opacity="0.4"/><path d="M307 366h3v1h-3zM308 365h1v3h-1z" fill="#c0c4c8" opacity="0.4"/><path d="M307 381h3v1h-3zM308 380h1v3h-1z" fill="#c0c4c8" opacity="0.4"/><path d="M307 396h3v1h-3zM308 395h1v3h-1z" fill="#c0c4c8" opacity="0.4"/><path d="M307 412h3v1h-3zM308 411h1v3h-1z" fill="#c0c4c8" opacity="0.4"/><path d="M307 427h3v1h-3zM308 426h1v3h-1z" fill="#c0c4c8" opacity="0.4"/><path d="M307 442h3v1h-3zM308 441h1v3h-1z" fill="#c0c4c8" opacity="0.4"/><path d="M307 458h3v1h-3zM308 457h1v3h-1z" fill="#d2d2d2"/><path d="M307 473h3v1h-3zM308 472h1v3h-1z" fill="#d2d2d2"/><path d="M307 489h3v1h-3zM308 488h1v3h-1z" fill="#d2d2d2"/><path d="M322 166h3v1h-3zM323 165h1v3h-1z" fill="#d2d2d2"/><path d="M322 181h3v1h-3zM323 180h1v3h-1z" fill="#d2d2d2"/><path d="M322 197h3v1h-3zM323 196h1v3h-1z" fill="#d2d2d2"/><path d="M322 212h3v1h-3zM323 211h1v3h-1z" fill="#c0c4c8" opacity="0.4"/><path d="M322 227h3v1h-3zM323 226h1v3h-1z" fill="#c0c4c8" opacity="0.4"/><path d="M322 243h3v1h-3zM323 242h1v3h-1z" fill="#c0c4c8" opacity="0.4"/><path d="M322 258h3v1h-3zM323 257h1v3h-1z" fill="#c0c4c8" opacity="0.4"/><path d="M322 274h3v1h-3zM323 273h1v3h-1z" fill="#c0c4c8" opacity="0.4"/><path d="M322 289h3v1h-3zM323 288h1v3h-1z" fill="#c0c4c8" opacity="0.4"/><path d="M322 304h3v1h-3zM323 303h1v3h-1z" fill="#c0c4c8" opacity="0.4"/><path d="M322 320h3v1h-3zM323 319h1v3h-1z" fill="#c0c4c8" opacity="0.4"/><path d="M322 335h3v1h-3zM323 334h1v3h-1z" fill="#c0c4c8" opacity="0.4"/><path d="M322 350h3v1h-3zM323 349h1v3h-1z" fill="#c0c4c8" opacity="0.4"/><path d="M322 366h3v1h-3zM323 365h1v3h-1z" fill="#c0c4c8" opacity="0.4"/><path d="M322 381h3v1h-3zM323 380h1v3h-1z" fill="#c0c4c8" opacity="0.4"/><path d="M322 396h3v1h-3zM323 395h1v3h-1z" fill="#c0c4c8" opacity="0.4"/><path d="M322 412h3v1h-3zM323 411h1v3h-1z" fill="#c0c4c8" opacity="0.4"/><path d="M322 427h3v1h-3zM323 426h1v3h-1z" fill="#c0c4c8" opacity="0.4"/><path d="M322 442h3v1h-3zM323 441h1v3h-1z" fill="#c0c4c8" opacity="0.4"/><path d="M322 458h3v1h-3zM323 457h1v3h-1z" fill="#d2d2d2"/><path d="M322 473h3v1h-3zM323 472h1v3h-1z" fill="#d2d2d2"/><path d="M322 489h3v1h-3zM323 488h1v3h-1z" fill="#d2d2d2"/><path d="M338 166h3v1h-3zM339 165h1v3h-1z" fill="#d2d2d2"/><path d="M338 181h3v1h-3zM339 180h1v3h-1z" fill="#d2d2d2"/><path d="M338 197h3v1h-3zM339 196h1v3h-1z" fill="#d2d2d2"/><path d="M338 212h3v1h-3zM339 211h1v3h-1z" fill="#c0c4c8" opacity="0.4"/><path d="M338 227h3v1h-3zM339 226h1v3h-1z" fill="#c0c4c8" opacity="0.4"/><path d="M338 243h3v1h-3zM339 242h1v3h-1z" fill="#c0c4c8" opacity="0.4"/><path d="M338 258h3v1h-3zM339 257h1v3h-1z" fill="#c0c4c8" opacity="0.4"/><path d="M338 274h3v1h-3zM339 273h1v3h-1z" fill="#c0c4c8" opacity="0.4"/><path d="M338 289h3v1h-3zM339 288h1v3h-1z" fill="#c0c4c8" opacity="0.4"/><path d="M338 304h3v1h-3zM339 303h1v3h-1z" fill="#c0c4c8" opacity="0.4"/><path d="M338 320h3v1h-3zM339 319h1v3h-1z" fill="#c0c4c8" opacity="0.4"/><path d="M338 335h3v1h-3zM339 334h1v3h-1z" fill="#c0c4c8" opacity="0.4"/><path d="M338 350h3v1h-3zM339 349h1v3h-1z" fill="#c0c4c8" opacity="0.4"/><path d="M338 366h3v1h-3zM339 365h1v3h-1z" fill="#c0c4c8" opacity="0.4"/><path d="M338 381h3v1h-3zM339 380h1v3h-1z" fill="#c0c4c8" opacity="0.4"/><path d="M338 396h3v1h-3zM339 395h1v3h-1z" fill="#c0c4c8" opacity="0.4"/><path d="M338 412h3v1h-3zM339 411h1v3h-1z" fill="#c0c4c8" opacity="0.4"/><path d="M338 427h3v1h-3zM339 426h1v3h-1z" fill="#c0c4c8" opacity="0.4"/><path d="M338 442h3v1h-3zM339 441h1v3h-1z" fill="#c0c4c8" opacity="0.4"/><path d="M338 458h3v1h-3zM339 457h1v3h-1z" fill="#d2d2d2"/><path d="M338 473h3v1h-3zM339 472h1v3h-1z" fill="#d2d2d2"/><path d="M338 489h3v1h-3zM339 488h1v3h-1z" fill="#d2d2d2"/><path d="M353 166h3v1h-3zM354 165h1v3h-1z" fill="#d2d2d2"/><path d="M353 181h3v1h-3zM354 180h1v3h-1z" fill="#d2d2d2"/><path d="M353 197h3v1h-3zM354 196h1v3h-1z" fill="#d2d2d2"/><path d="M353 212h3v1h-3zM354 211h1v3h-1z" fill="#c0c4c8" opacity="0.4"/><path d="M353 227h3v1h-3zM354 226h1v3h-1z" fill="#c0c4c8" opacity="0.4"/><path d="M353 243h3v1h-3zM354 242h1v3h-1z" fill="#c0c4c8" opacity="0.4"/><path d="M353 258h3v1h-3zM354 257h1v3h-1z" fill="#c0c4c8" opacity="0.4"/><path d="M353 274h3v1h-3zM354 273h1v3h-1z" fill="#c0c4c8" opacity="0.4"/><path d="M353 289h3v1h-3zM354 288h1v3h-1z" fill="#c0c4c8" opacity="0.4"/><path d="M353 304h3v1h-3zM354 303h1v3h-1z" fill="#c0c4c8" opacity="0.4"/><path d="M353 320h3v1h-3zM354 319h1v3h-1z" fill="#c0c4c8" opacity="0.4"/><path d="M353 335h3v1h-3zM354 334h1v3h-1z" fill="#c0c4c8" opacity="0.4"/><path d="M353 350h3v1h-3zM354 349h1v3h-1z" fill="#c0c4c8" opacity="0.4"/><path d="M353 366h3v1h-3zM354 365h1v3h-1z" fill="#c0c4c8" opacity="0.4"/><path d="M353 381h3v1h-3zM354 380h1v3h-1z" fill="#c0c4c8" opacity="0.4"/><path d="M353 396h3v1h-3zM354 395h1v3h-1z" fill="#c0c4c8" opacity="0.4"/><path d="M353 412h3v1h-3zM354 411h1v3h-1z" fill="#c0c4c8" opacity="0.4"/><path d="M353 427h3v1h-3zM354 426h1v3h-1z" fill="#c0c4c8" opacity="0.4"/><path d="M353 442h3v1h-3zM354 441h1v3h-1z" fill="#c0c4c8" opacity="0.4"/><path d="M353 458h3v1h-3zM354 457h1v3h-1z" fill="#d2d2d2"/><path d="M353 473h3v1h-3zM354 472h1v3h-1z" fill="#d2d2d2"/><path d="M353 489h3v1h-3zM354 488h1v3h-1z" fill="#d2d2d2"/><path d="M369 166h3v1h-3zM370 165h1v3h-1z" fill="#d2d2d2"/><path d="M369 181h3v1h-3zM370 180h1v3h-1z" fill="#d2d2d2"/><path d="M369 197h3v1h-3zM370 196h1v3h-1z" fill="#d2d2d2"/><path d="M369 212h3v1h-3zM370 211h1v3h-1z" fill="#c0c4c8" opacity="0.4"/><path d="M369 227h3v1h-3zM370 226h1v3h-1z" fill="#c0c4c8" opacity="0.4"/><path d="M369 243h3v1h-3zM370 242h1v3h-1z" fill="#c0c4c8" opacity="0.4"/><path d="M369 258h3v1h-3zM370 257h1v3h-1z" fill="#c0c4c8" opacity="0.4"/><path d="M369 274h3v1h-3zM370 273h1v3h-1z" fill="#c0c4c8" opacity="0.4"/><path d="M369 289h3v1h-3zM370 288h1v3h-1z" fill="#c0c4c8" opacity="0.4"/><path d="M369 304h3v1h-3zM370 303h1v3h-1z" fill="#c0c4c8" opacity="0.4"/><path d="M369 320h3v1h-3zM370 319h1v3h-1z" fill="#c0c4c8" opacity="0.4"/><path d="M369 335h3v1h-3zM370 334h1v3h-1z" fill="#c0c4c8" opacity="0.4"/><path d="M369 350h3v1h-3zM370 349h1v3h-1z" fill="#c0c4c8" opacity="0.4"/><path d="M369 366h3v1h-3zM370 365h1v3h-1z" fill="#c0c4c8" opacity="0.4"/><path d="M369 381h3v1h-3zM370 380h1v3h-1z" fill="#c0c4c8" opacity="0.4"/><path d="M369 396h3v1h-3zM370 395h1v3h-1z" fill="#c0c4c8" opacity="0.4"/><path d="M369 412h3v1h-3zM370 411h1v3h-1z" fill="#c0c4c8" opacity="0.4"/><path d="M369 427h3v1h-3zM370 426h1v3h-1z" fill="#c0c4c8" opacity="0.4"/><path d="M369 442h3v1h-3zM370 441h1v3h-1z" fill="#c0c4c8" opacity="0.4"/><path d="M369 458h3v1h-3zM370 457h1v3h-1z" fill="#d2d2d2"/><path d="M369 473h3v1h-3zM370 472h1v3h-1z" fill="#d2d2d2"/><path d="M369 489h3v1h-3zM370 488h1v3h-1z" fill="#d2d2d2"/><path d="M384 166h3v1h-3zM385 165h1v3h-1z" fill="#d2d2d2"/><path d="M384 181h3v1h-3zM385 180h1v3h-1z" fill="#d2d2d2"/><path d="M384 197h3v1h-3zM385 196h1v3h-1z" fill="#d2d2d2"/><path d="M384 212h3v1h-3zM385 211h1v3h-1z" fill="#c0c4c8" opacity="0.4"/><path d="M384 227h3v1h-3zM385 226h1v3h-1z" fill="#c0c4c8" opacity="0.4"/><path d="M384 243h3v1h-3zM385 242h1v3h-1z" fill="#c0c4c8" opacity="0.4"/><path d="M384 258h3v1h-3zM385 257h1v3h-1z" fill="#c0c4c8" opacity="0.4"/><path d="M384 274h3v1h-3zM385 273h1v3h-1z" fill="#c0c4c8" opacity="0.4"/><path d="M384 289h3v1h-3zM385 288h1v3h-1z" fill="#c0c4c8" opacity="0.4"/><path d="M384 304h3v1h-3zM385 303h1v3h-1z" fill="#c0c4c8" opacity="0.4"/><path d="M384 320h3v1h-3zM385 319h1v3h-1z" fill="#c0c4c8" opacity="0.4"/><path d="M384 335h3v1h-3zM385 334h1v3h-1z" fill="#c0c4c8" opacity="0.4"/><path d="M384 350h3v1h-3zM385 349h1v3h-1z" fill="#c0c4c8" opacity="0.4"/><path d="M384 366h3v1h-3zM385 365h1v3h-1z" fill="#c0c4c8" opacity="0.4"/><path d="M384 381h3v1h-3zM385 380h1v3h-1z" fill="#c0c4c8" opacity="0.4"/><path d="M384 396h3v1h-3zM385 395h1v3h-1z" fill="#c0c4c8" opacity="0.4"/><path d="M384 412h3v1h-3zM385 411h1v3h-1z" fill="#c0c4c8" opacity="0.4"/><path d="M384 427h3v1h-3zM385 426h1v3h-1z" fill="#c0c4c8" opacity="0.4"/><path d="M384 442h3v1h-3zM385 441h1v3h-1z" fill="#c0c4c8" opacity="0.4"/><path d="M384 458h3v1h-3zM385 457h1v3h-1z" fill="#d2d2d2"/><path d="M384 473h3v1h-3zM385 472h1v3h-1z" fill="#d2d2d2"/><path d="M384 489h3v1h-3zM385 488h1v3h-1z" fill="#d2d2d2"/><path d="M399 166h3v1h-3zM400 165h1v3h-1z" fill="#d2d2d2"/><path d="M399 181h3v1h-3zM400 180h1v3h-1z" fill="#d2d2d2"/><path d="M399 197h3v1h-3zM400 196h1v3h-1z" fill="#d2d2d2"/><path d="M399 212h3v1h-3zM400 211h1v3h-1z" fill="#d2d2d2"/><path d="M399 227h3v1h-3zM400 226h1v3h-1z" fill="#d2d2d2"/><path d="M399 243h3v1h-3zM400 242h1v3h-1z" fill="#d2d2d2"/><path d="M399 258h3v1h-3zM400 257h1v3h-1z" fill="#d2d2d2"/><path d="M399 274h3v1h-3zM400 273h1v3h-1z" fill="#d2d2d2"/><path d="M399 289h3v1h-3zM400 288h1v3h-1z" fill="#d2d2d2"/><path d="M399 304h3v1h-3zM400 303h1v3h-1z" fill="#d2d2d2"/><path d="M399 320h3v1h-3zM400 319h1v3h-1z" fill="#d2d2d2"/><path d="M399 335h3v1h-3zM400 334h1v3h-1z" fill="#d2d2d2"/><path d="M399 350h3v1h-3zM400 349h1v3h-1z" fill="#d2d2d2"/><path d="M399 366h3v1h-3zM400 365h1v3h-1z" fill="#d2d2d2"/><path d="M399 381h3v1h-3zM400 380h1v3h-1z" fill="#d2d2d2"/><path d="M399 396h3v1h-3zM400 395h1v3h-1z" fill="#d2d2d2"/><path d="M399 412h3v1h-3zM400 411h1v3h-1z" fill="#d2d2d2"/><path d="M399 427h3v1h-3zM400 426h1v3h-1z" fill="#d2d2d2"/><path d="M399 442h3v1h-3zM400 441h1v3h-1z" fill="#d2d2d2"/><path d="M399 458h3v1h-3zM400 457h1v3h-1z" fill="#d2d2d2"/><path d="M399 473h3v1h-3zM400 472h1v3h-1z" fill="#d2d2d2"/><path d="M399 489h3v1h-3zM400 488h1v3h-1z" fill="#d2d2d2"/><path d="M415 166h3v1h-3zM416 165h1v3h-1z" fill="#d2d2d2"/><path d="M415 181h3v1h-3zM416 180h1v3h-1z" fill="#d2d2d2"/><path d="M415 197h3v1h-3zM416 196h1v3h-1z" fill="#d2d2d2"/><path d="M415 212h3v1h-3zM416 211h1v3h-1z" fill="#d2d2d2"/><path d="M415 227h3v1h-3zM416 226h1v3h-1z" fill="#d2d2d2"/><path d="M415 243h3v1h-3zM416 242h1v3h-1z" fill="#d2d2d2"/><path d="M415 258h3v1h-3zM416 257h1v3h-1z" fill="#d2d2d2"/><path d="M415 274h3v1h-3zM416 273h1v3h-1z" fill="#d2d2d2"/><path d="M415 289h3v1h-3zM416 288h1v3h-1z" fill="#d2d2d2"/><path d="M415 304h3v1h-3zM416 303h1v3h-1z" fill="#d2d2d2"/><path d="M415 320h3v1h-3zM416 319h1v3h-1z" fill="#d2d2d2"/><path d="M415 335h3v1h-3zM416 334h1v3h-1z" fill="#d2d2d2"/><path d="M415 350h3v1h-3zM416 349h1v3h-1z" fill="#d2d2d2"/><path d="M415 366h3v1h-3zM416 365h1v3h-1z" fill="#d2d2d2"/><path d="M415 381h3v1h-3zM416 380h1v3h-1z" fill="#d2d2d2"/><path d="M415 396h3v1h-3zM416 395h1v3h-1z" fill="#d2d2d2"/><path d="M415 412h3v1h-3zM416 411h1v3h-1z" fill="#d2d2d2"/><path d="M415 427h3v1h-3zM416 426h1v3h-1z" fill="#d2d2d2"/><path d="M415 442h3v1h-3zM416 441h1v3h-1z" fill="#d2d2d2"/><path d="M415 458h3v1h-3zM416 457h1v3h-1z" fill="#d2d2d2"/><path d="M415 473h3v1h-3zM416 472h1v3h-1z" fill="#d2d2d2"/><path d="M415 489h3v1h-3zM416 488h1v3h-1z" fill="#d2d2d2"/><path d="M430 166h3v1h-3zM431 165h1v3h-1z" fill="#d2d2d2"/><path d="M430 181h3v1h-3zM431 180h1v3h-1z" fill="#d2d2d2"/><path d="M430 197h3v1h-3zM431 196h1v3h-1z" fill="#d2d2d2"/><path d="M430 212h3v1h-3zM431 211h1v3h-1z" fill="#d2d2d2"/><path d="M430 227h3v1h-3zM431 226h1v3h-1z" fill="#d2d2d2"/><path d="M430 243h3v1h-3zM431 242h1v3h-1z" fill="#d2d2d2"/><path d="M430 258h3v1h-3zM431 257h1v3h-1z" fill="#d2d2d2"/><path d="M430 274h3v1h-3zM431 273h1v3h-1z" fill="#d2d2d2"/><path d="M430 289h3v1h-3zM431 288h1v3h-1z" fill="#d2d2d2"/><path d="M430 304h3v1h-3zM431 303h1v3h-1z" fill="#d2d2d2"/><path d="M430 320h3v1h-3zM431 319h1v3h-1z" fill="#d2d2d2"/><path d="M430 335h3v1h-3zM431 334h1v3h-1z" fill="#d2d2d2"/><path d="M430 350h3v1h-3zM431 349h1v3h-1z" fill="#d2d2d2"/><path d="M430 366h3v1h-3zM431 365h1v3h-1z" fill="#d2d2d2"/><path d="M430 381h3v1h-3zM431 380h1v3h-1z" fill="#d2d2d2"/><path d="M430 396h3v1h-3zM431 395h1v3h-1z" fill="#d2d2d2"/><path d="M430 412h3v1h-3zM431 411h1v3h-1z" fill="#d2d2d2"/><path d="M430 427h3v1h-3zM431 426h1v3h-1z" fill="#d2d2d2"/><path d="M430 442h3v1h-3zM431 441h1v3h-1z" fill="#d2d2d2"/><path d="M430 458h3v1h-3zM431 457h1v3h-1z" fill="#d2d2d2"/><path d="M430 473h3v1h-3zM431 472h1v3h-1z" fill="#d2d2d2"/><path d="M430 489h3v1h-3zM431 488h1v3h-1z" fill="#d2d2d2"/><path d="M445 166h3v1h-3zM446 165h1v3h-1z" fill="#d2d2d2"/><path d="M445 181h3v1h-3zM446 180h1v3h-1z" fill="#d2d2d2"/><path d="M445 197h3v1h-3zM446 196h1v3h-1z" fill="#d2d2d2"/><path d="M445 212h3v1h-3zM446 211h1v3h-1z" fill="#d2d2d2"/><path d="M445 227h3v1h-3zM446 226h1v3h-1z" fill="#d2d2d2"/><path d="M445 243h3v1h-3zM446 242h1v3h-1z" fill="#d2d2d2"/><path d="M445 258h3v1h-3zM446 257h1v3h-1z" fill="#d2d2d2"/><path d="M445 274h3v1h-3zM446 273h1v3h-1z" fill="#d2d2d2"/><path d="M445 289h3v1h-3zM446 288h1v3h-1z" fill="#d2d2d2"/><path d="M445 304h3v1h-3zM446 303h1v3h-1z" fill="#d2d2d2"/><path d="M445 320h3v1h-3zM446 319h1v3h-1z" fill="#d2d2d2"/><path d="M445 335h3v1h-3zM446 334h1v3h-1z" fill="#d2d2d2"/><path d="M445 350h3v1h-3zM446 349h1v3h-1z" fill="#d2d2d2"/><path d="M445 366h3v1h-3zM446 365h1v3h-1z" fill="#d2d2d2"/><path d="M445 381h3v1h-3zM446 380h1v3h-1z" fill="#d2d2d2"/><path d="M445 396h3v1h-3zM446 395h1v3h-1z" fill="#d2d2d2"/><path d="M445 412h3v1h-3zM446 411h1v3h-1z" fill="#d2d2d2"/><path d="M445 427h3v1h-3zM446 426h1v3h-1z" fill="#d2d2d2"/><path d="M445 442h3v1h-3zM446 441h1v3h-1z" fill="#d2d2d2"/><path d="M445 458h3v1h-3zM446 457h1v3h-1z" fill="#d2d2d2"/><path d="M445 473h3v1h-3zM446 472h1v3h-1z" fill="#d2d2d2"/><path d="M445 489h3v1h-3zM446 488h1v3h-1z" fill="#d2d2d2"/><path d="M461 166h3v1h-3zM462 165h1v3h-1z" fill="#d2d2d2"/><path d="M461 181h3v1h-3zM462 180h1v3h-1z" fill="#d2d2d2"/><path d="M461 197h3v1h-3zM462 196h1v3h-1z" fill="#d2d2d2"/><path d="M461 212h3v1h-3zM462 211h1v3h-1z" fill="#d2d2d2"/><path d="M461 227h3v1h-3zM462 226h1v3h-1z" fill="#d2d2d2"/><path d="M461 243h3v1h-3zM462 242h1v3h-1z" fill="#d2d2d2"/><path d="M461 258h3v1h-3zM462 257h1v3h-1z" fill="#d2d2d2"/><path d="M461 274h3v1h-3zM462 273h1v3h-1z" fill="#d2d2d2"/><path d="M461 289h3v1h-3zM462 288h1v3h-1z" fill="#d2d2d2"/><path d="M461 304h3v1h-3zM462 303h1v3h-1z" fill="#d2d2d2"/><path d="M461 320h3v1h-3zM462 319h1v3h-1z" fill="#d2d2d2"/><path d="M461 335h3v1h-3zM462 334h1v3h-1z" fill="#d2d2d2"/><path d="M461 350h3v1h-3zM462 349h1v3h-1z" fill="#d2d2d2"/><path d="M461 366h3v1h-3zM462 365h1v3h-1z" fill="#d2d2d2"/><path d="M461 381h3v1h-3zM462 380h1v3h-1z" fill="#d2d2d2"/><path d="M461 396h3v1h-3zM462 395h1v3h-1z" fill="#d2d2d2"/><path d="M461 412h3v1h-3zM462 411h1v3h-1z" fill="#d2d2d2"/><path d="M461 427h3v1h-3zM462 426h1v3h-1z" fill="#d2d2d2"/><path d="M461 442h3v1h-3zM462 441h1v3h-1z" fill="#d2d2d2"/><path d="M461 458h3v1h-3zM462 457h1v3h-1z" fill="#d2d2d2"/><path d="M461 473h3v1h-3zM462 472h1v3h-1z" fill="#d2d2d2"/><path d="M461 489h3v1h-3zM462 488h1v3h-1z" fill="#d2d2d2"/><path d="M476 166h3v1h-3zM477 165h1v3h-1z" fill="#d2d2d2"/><path d="M476 181h3v1h-3zM477 180h1v3h-1z" fill="#d2d2d2"/><path d="M476 197h3v1h-3zM477 196h1v3h-1z" fill="#d2d2d2"/><path d="M476 212h3v1h-3zM477 211h1v3h-1z" fill="#d2d2d2"/><path d="M476 227h3v1h-3zM477 226h1v3h-1z" fill="#d2d2d2"/><path d="M476 243h3v1h-3zM477 242h1v3h-1z" fill="#d2d2d2"/><path d="M476 258h3v1h-3zM477 257h1v3h-1z" fill="#d2d2d2"/><path d="M476 274h3v1h-3zM477 273h1v3h-1z" fill="#d2d2d2"/><path d="M476 289h3v1h-3zM477 288h1v3h-1z" fill="#d2d2d2"/><path d="M476 304h3v1h-3zM477 303h1v3h-1z" fill="#d2d2d2"/><path d="M476 320h3v1h-3zM477 319h1v3h-1z" fill="#d2d2d2"/><path d="M476 335h3v1h-3zM477 334h1v3h-1z" fill="#d2d2d2"/><path d="M476 350h3v1h-3zM477 349h1v3h-1z" fill="#d2d2d2"/><path d="M476 366h3v1h-3zM477 365h1v3h-1z" fill="#d2d2d2"/><path d="M476 381h3v1h-3zM477 380h1v3h-1z" fill="#d2d2d2"/><path d="M476 396h3v1h-3zM477 395h1v3h-1z" fill="#d2d2d2"/><path d="M476 412h3v1h-3zM477 411h1v3h-1z" fill="#d2d2d2"/><path d="M476 427h3v1h-3zM477 426h1v3h-1z" fill="#d2d2d2"/><path d="M476 442h3v1h-3zM477 441h1v3h-1z" fill="#d2d2d2"/><path d="M476 458h3v1h-3zM477 457h1v3h-1z" fill="#d2d2d2"/><path d="M476 473h3v1h-3zM477 472h1v3h-1z" fill="#d2d2d2"/><path d="M476 489h3v1h-3zM477 488h1v3h-1z" fill="#d2d2d2"/><path d="M491 166h3v1h-3zM492 165h1v3h-1z" fill="#d2d2d2"/><path d="M491 181h3v1h-3zM492 180h1v3h-1z" fill="#d2d2d2"/><path d="M491 197h3v1h-3zM492 196h1v3h-1z" fill="#d2d2d2"/><path d="M491 212h3v1h-3zM492 211h1v3h-1z" fill="#d2d2d2"/><path d="M491 227h3v1h-3zM492 226h1v3h-1z" fill="#d2d2d2"/><path d="M491 243h3v1h-3zM492 242h1v3h-1z" fill="#d2d2d2"/><path d="M491 258h3v1h-3zM492 257h1v3h-1z" fill="#d2d2d2"/><path d="M491 274h3v1h-3zM492 273h1v3h-1z" fill="#d2d2d2"/><path d="M491 289h3v1h-3zM492 288h1v3h-1z" fill="#d2d2d2"/><path d="M491 304h3v1h-3zM492 303h1v3h-1z" fill="#d2d2d2"/><path d="M491 320h3v1h-3zM492 319h1v3h-1z" fill="#d2d2d2"/><path d="M491 335h3v1h-3zM492 334h1v3h-1z" fill="#d2d2d2"/><path d="M491 350h3v1h-3zM492 349h1v3h-1z" fill="#d2d2d2"/><path d="M491 366h3v1h-3zM492 365h1v3h-1z" fill="#d2d2d2"/><path d="M491 381h3v1h-3zM492 380h1v3h-1z" fill="#d2d2d2"/><path d="M491 396h3v1h-3zM492 395h1v3h-1z" fill="#d2d2d2"/><path d="M491 412h3v1h-3zM492 411h1v3h-1z" fill="#d2d2d2"/><path d="M491 427h3v1h-3zM492 426h1v3h-1z" fill="#d2d2d2"/><path d="M491 442h3v1h-3zM492 441h1v3h-1z" fill="#d2d2d2"/><path d="M491 458h3v1h-3zM492 457h1v3h-1z" fill="#d2d2d2"/><path d="M491 473h3v1h-3zM492 472h1v3h-1z" fill="#d2d2d2"/><path d="M491 489h3v1h-3zM492 488h1v3h-1z" fill="#d2d2d2"/></g></svg>
<svg style="position:absolute;left:81px;top:198px;" width="313" height="254" viewBox="0 0 313 254"><rect x="0.5" y="0.5" width="311" height="252" fill="none" stroke="#4aa0e8" stroke-width="1"/><rect x="0.5" y="0.5" width="311" height="252" fill="none" stroke="#70093a" stroke-width="1" stroke-dasharray="4 2"/></svg>
<div style="left:81px;top:198px;width:8px;height:8px;background:#fff;border:1px solid #2f8ae0;"></div>
<div style="left:232px;top:198px;width:8px;height:8px;background:#fff;border:1px solid #2f8ae0;"></div>
<div style="left:383px;top:198px;width:8px;height:8px;background:#fff;border:1px solid #2f8ae0;"></div>
<div style="left:81px;top:319px;width:8px;height:8px;background:#fff;border:1px solid #2f8ae0;"></div>
<div style="left:383px;top:319px;width:8px;height:8px;background:#fff;border:1px solid #2f8ae0;"></div>
<div style="left:81px;top:441px;width:8px;height:8px;background:#fff;border:1px solid #2f8ae0;"></div>
<div style="left:232px;top:441px;width:8px;height:8px;background:#fff;border:1px solid #2f8ae0;"></div>
<div style="left:383px;top:441px;width:8px;height:8px;background:#fff;border:1px solid #2f8ae0;"></div>
<svg style="position:absolute;left:0;top:0" width="540" height="160"><rect x="32.0" y="149" width="1" height="4" fill="#000"/><rect x="39.0" y="149" width="1" height="4" fill="#000"/><rect x="47.0" y="134" width="1" height="19" fill="#000"/><rect x="55.0" y="149" width="1" height="4" fill="#000"/><rect x="62.0" y="149" width="1" height="4" fill="#000"/><rect x="70.0" y="149" width="1" height="4" fill="#000"/><rect x="78.0" y="149" width="1" height="4" fill="#000"/><rect x="85.0" y="146" width="1" height="7" fill="#000"/><rect x="93.0" y="149" width="1" height="4" fill="#000"/><rect x="101.0" y="149" width="1" height="4" fill="#000"/><rect x="108.0" y="149" width="1" height="4" fill="#000"/><rect x="116.0" y="149" width="1" height="4" fill="#000"/><rect x="124.0" y="134" width="1" height="19" fill="#000"/><rect x="131.0" y="149" width="1" height="4" fill="#000"/><rect x="139.0" y="149" width="1" height="4" fill="#000"/><rect x="147.0" y="149" width="1" height="4" fill="#000"/><rect x="154.0" y="149" width="1" height="4" fill="#000"/><rect x="162.0" y="146" width="1" height="7" fill="#000"/><rect x="170.0" y="149" width="1" height="4" fill="#000"/><rect x="177.0" y="149" width="1" height="4" fill="#000"/><rect x="185.0" y="149" width="1" height="4" fill="#000"/><rect x="193.0" y="149" width="1" height="4" fill="#000"/><rect x="200.0" y="134" width="1" height="19" fill="#000"/><rect x="208.0" y="149" width="1" height="4" fill="#000"/><rect x="216.0" y="149" width="1" height="4" fill="#000"/><rect x="223.0" y="149" width="1" height="4" fill="#000"/><rect x="231.0" y="149" width="1" height="4" fill="#000"/><rect x="239.0" y="146" width="1" height="7" fill="#000"/><rect x="246.0" y="149" width="1" height="4" fill="#000"/><rect x="254.0" y="149" width="1" height="4" fill="#000"/><rect x="261.0" y="149" width="1" height="4" fill="#000"/><rect x="269.0" y="149" width="1" height="4" fill="#000"/><rect x="277.0" y="134" width="1" height="19" fill="#000"/><rect x="284.0" y="149" width="1" height="4" fill="#000"/><rect x="292.0" y="149" width="1" height="4" fill="#000"/><rect x="300.0" y="149" width="1" height="4" fill="#000"/><rect x="307.0" y="149" width="1" height="4" fill="#000"/><rect x="315.0" y="146" width="1" height="7" fill="#000"/><rect x="323.0" y="149" width="1" height="4" fill="#000"/><rect x="330.0" y="149" width="1" height="4" fill="#000"/><rect x="338.0" y="149" width="1" height="4" fill="#000"/><rect x="346.0" y="149" width="1" height="4" fill="#000"/><rect x="353.0" y="134" width="1" height="19" fill="#000"/><rect x="361.0" y="149" width="1" height="4" fill="#000"/><rect x="369.0" y="149" width="1" height="4" fill="#000"/><rect x="376.0" y="149" width="1" height="4" fill="#000"/><rect x="384.0" y="149" width="1" height="4" fill="#000"/><rect x="392.0" y="146" width="1" height="7" fill="#000"/><rect x="399.0" y="149" width="1" height="4" fill="#000"/><rect x="407.0" y="149" width="1" height="4" fill="#000"/><rect x="415.0" y="149" width="1" height="4" fill="#000"/><rect x="422.0" y="149" width="1" height="4" fill="#000"/><rect x="430.0" y="134" width="1" height="19" fill="#000"/><rect x="438.0" y="149" width="1" height="4" fill="#000"/><rect x="445.0" y="149" width="1" height="4" fill="#000"/><rect x="453.0" y="149" width="1" height="4" fill="#000"/><rect x="461.0" y="149" width="1" height="4" fill="#000"/><rect x="468.0" y="146" width="1" height="7" fill="#000"/><rect x="476.0" y="149" width="1" height="4" fill="#000"/><rect x="484.0" y="149" width="1" height="4" fill="#000"/><rect x="491.0" y="149" width="1" height="4" fill="#000"/><rect x="499.0" y="149" width="1" height="4" fill="#000"/><rect x="507.0" y="134" width="1" height="19" fill="#000"/><rect x="514.0" y="149" width="1" height="4" fill="#000"/><rect x="522.0" y="149" width="1" height="4" fill="#000"/><rect x="530.0" y="149" width="1" height="4" fill="#000"/><rect x="523" y="134" width="1" height="19" fill="#f00"/></svg>
<div class="t" style="left:49.5px;top:136.53px;font-size:10px;line-height:10px;color:#000;">0</div>
<div class="t" style="left:126.1px;top:136.53px;font-size:10px;line-height:10px;color:#000;">50</div>
<div class="t" style="left:202.7px;top:136.53px;font-size:10px;line-height:10px;color:#000;">100</div>
<div class="t" style="left:279.3px;top:136.53px;font-size:10px;line-height:10px;color:#000;">150</div>
<div class="t" style="left:355.9px;top:136.53px;font-size:10px;line-height:10px;color:#000;">200</div>
<div class="t" style="left:432.5px;top:136.53px;font-size:10px;line-height:10px;color:#000;">250</div>
<div class="t" style="left:509.1px;top:136.53px;font-size:10px;line-height:10px;color:#000;">300</div>
<svg style="position:absolute;left:0;top:0" width="40" height="520"><rect x="26" y="158.0" width="4" height="1" fill="#000"/><rect x="11" y="166.0" width="19" height="1" fill="#000"/><rect x="26" y="174.0" width="4" height="1" fill="#000"/><rect x="26" y="181.0" width="4" height="1" fill="#000"/><rect x="26" y="189.0" width="4" height="1" fill="#000"/><rect x="26" y="197.0" width="4" height="1" fill="#000"/><rect x="23" y="204.0" width="7" height="1" fill="#000"/><rect x="26" y="212.0" width="4" height="1" fill="#000"/><rect x="26" y="220.0" width="4" height="1" fill="#000"/><rect x="26" y="227.0" width="4" height="1" fill="#000"/><rect x="26" y="235.0" width="4" height="1" fill="#000"/><rect x="11" y="243.0" width="19" height="1" fill="#000"/><rect x="26" y="250.0" width="4" height="1" fill="#000"/><rect x="26" y="258.0" width="4" height="1" fill="#000"/><rect x="26" y="265.0" width="4" height="1" fill="#000"/><rect x="26" y="273.0" width="4" height="1" fill="#000"/><rect x="23" y="281.0" width="7" height="1" fill="#000"/><rect x="26" y="288.0" width="4" height="1" fill="#000"/><rect x="26" y="296.0" width="4" height="1" fill="#000"/><rect x="26" y="304.0" width="4" height="1" fill="#000"/><rect x="26" y="311.0" width="4" height="1" fill="#000"/><rect x="11" y="319.0" width="19" height="1" fill="#000"/><rect x="26" y="327.0" width="4" height="1" fill="#000"/><rect x="26" y="334.0" width="4" height="1" fill="#000"/><rect x="26" y="342.0" width="4" height="1" fill="#000"/><rect x="26" y="350.0" width="4" height="1" fill="#000"/><rect x="23" y="357.0" width="7" height="1" fill="#000"/><rect x="26" y="365.0" width="4" height="1" fill="#000"/><rect x="26" y="373.0" width="4" height="1" fill="#000"/><rect x="26" y="380.0" width="4" height="1" fill="#000"/><rect x="26" y="388.0" width="4" height="1" fill="#000"/><rect x="11" y="396.0" width="19" height="1" fill="#000"/><rect x="26" y="403.0" width="4" height="1" fill="#000"/><rect x="26" y="411.0" width="4" height="1" fill="#000"/><rect x="26" y="419.0" width="4" height="1" fill="#000"/><rect x="26" y="426.0" width="4" height="1" fill="#000"/><rect x="23" y="434.0" width="7" height="1" fill="#000"/><rect x="26" y="442.0" width="4" height="1" fill="#000"/><rect x="26" y="449.0" width="4" height="1" fill="#000"/><rect x="26" y="457.0" width="4" height="1" fill="#000"/><rect x="26" y="465.0" width="4" height="1" fill="#000"/><rect x="11" y="472.0" width="19" height="1" fill="#000"/><rect x="26" y="480.0" width="4" height="1" fill="#000"/><rect x="26" y="488.0" width="4" height="1" fill="#000"/><rect x="26" y="495.0" width="4" height="1" fill="#000"/><rect x="26" y="503.0" width="4" height="1" fill="#000"/><rect x="23" y="511.0" width="7" height="1" fill="#000"/><rect x="11" y="308" width="19" height="1" fill="#f00"/></svg>
<div class="t" style="left:24px;top:169.9px;font-size:10px;line-height:10px;transform-origin:0 0;transform:rotate(-90deg) translate(-100%,-100%);white-space:nowrap;"><span style="display:inline-block">0</span></div>
<div class="t" style="left:24px;top:246.5px;font-size:10px;line-height:10px;transform-origin:0 0;transform:rotate(-90deg) translate(-100%,-100%);white-space:nowrap;"><span style="display:inline-block">50</span></div>
<div class="t" style="left:24px;top:323.1px;font-size:10px;line-height:10px;transform-origin:0 0;transform:rotate(-90deg) translate(-100%,-100%);white-space:nowrap;"><span style="display:inline-block">100</span></div>
<div class="t" style="left:24px;top:399.7px;font-size:10px;line-height:10px;transform-origin:0 0;transform:rotate(-90deg) translate(-100%,-100%);white-space:nowrap;"><span style="display:inline-block">150</span></div>
<div class="t" style="left:24px;top:476.3px;font-size:10px;line-height:10px;transform-origin:0 0;transform:rotate(-90deg) translate(-100%,-100%);white-space:nowrap;"><span style="display:inline-block">200</span></div>
<div style="left:522px;top:153px;width:16px;height:349px;background:repeating-conic-gradient(#e2e2e2 0 25%,#fbfbfb 0 50%) 0 0/2px 2px;"></div>
<div style="left:522px;top:153px;width:14px;height:13px;border:1px solid #9a9a9a;border-radius:3px;background:linear-gradient(#fbfbfb,#e3e3e3);"></div>
<svg style="position:absolute;left:0;top:0;width:890px;height:554px;pointer-events:none"><path d="M526.0 162.5 L534.0 162.5 L530.0 158.5 Z" fill="#000"/></svg>
<div style="left:522px;top:179px;width:14px;height:278px;border:1px solid #9a9a9a;border-radius:3px;background:linear-gradient(90deg,#fbfbfb,#e6e6e6);"></div>
<svg style="position:absolute;left:526px;top:312px;" width="12" height="20" viewBox="0 0 12 20"><rect x="0" y="0" width="2" height="2" fill="#a8a8a8"/><rect x="1" y="1" width="1" height="1" fill="#fff"/><rect x="0" y="4" width="2" height="2" fill="#a8a8a8"/><rect x="1" y="5" width="1" height="1" fill="#fff"/><rect x="0" y="8" width="2" height="2" fill="#a8a8a8"/><rect x="1" y="9" width="1" height="1" fill="#fff"/><rect x="0" y="12" width="2" height="2" fill="#a8a8a8"/><rect x="1" y="13" width="1" height="1" fill="#fff"/><rect x="0" y="16" width="2" height="2" fill="#a8a8a8"/><rect x="1" y="17" width="1" height="1" fill="#fff"/><rect x="4" y="0" width="2" height="2" fill="#a8a8a8"/><rect x="5" y="1" width="1" height="1" fill="#fff"/><rect x="4" y="4" width="2" height="2" fill="#a8a8a8"/><rect x="5" y="5" width="1" height="1" fill="#fff"/><rect x="4" y="8" width="2" height="2" fill="#a8a8a8"/><rect x="5" y="9" width="1" height="1" fill="#fff"/><rect x="4" y="12" width="2" height="2" fill="#a8a8a8"/><rect x="5" y="13" width="1" height="1" fill="#fff"/><rect x="4" y="16" width="2" height="2" fill="#a8a8a8"/><rect x="5" y="17" width="1" height="1" fill="#fff"/><rect x="8" y="0" width="2" height="2" fill="#a8a8a8"/><rect x="9" y="1" width="1" height="1" fill="#fff"/><rect x="8" y="4" width="2" height="2" fill="#a8a8a8"/><rect x="9" y="5" width="1" height="1" fill="#fff"/><rect x="8" y="8" width="2" height="2" fill="#a8a8a8"/><rect x="9" y="9" width="1" height="1" fill="#fff"/><rect x="8" y="12" width="2" height="2" fill="#a8a8a8"/><rect x="9" y="13" width="1" height="1" fill="#fff"/><rect x="8" y="16" width="2" height="2" fill="#a8a8a8"/><rect x="9" y="17" width="1" height="1" fill="#fff"/></svg>
<div style="left:522px;top:471px;width:14px;height:13px;border:1px solid #9a9a9a;border-radius:3px;background:linear-gradient(#fbfbfb,#e3e3e3);"></div>
<svg style="position:absolute;left:0;top:0;width:890px;height:554px;pointer-events:none"><path d="M526.0 480.5 L534.0 480.5 L530.0 476.5 Z" fill="#000"/></svg>
<div style="left:522px;top:486px;width:14px;height:13px;border:1px solid #9a9a9a;border-radius:3px;background:linear-gradient(#fbfbfb,#e3e3e3);"></div>
<svg style="position:absolute;left:0;top:0;width:890px;height:554px;pointer-events:none"><path d="M526.0 491.5 L534.0 491.5 L530.0 495.5 Z" fill="#000"/></svg>
<div style="left:30px;top:502px;width:492px;height:16px;background:repeating-conic-gradient(#e2e2e2 0 25%,#fbfbfb 0 50%) 0 0/2px 2px;"></div>
<div style="left:521px;top:502px;width:17px;height:17px;background:#f0f0f0;"></div>
<div style="left:31px;top:502px;width:13px;height:14px;border:1px solid #9a9a9a;border-radius:3px;background:linear-gradient(#fbfbfb,#e3e3e3);"></div>
<svg style="position:absolute;left:0;top:0;width:890px;height:554px;pointer-events:none"><path d="M40.5 506.0 L40.5 514.0 L36.5 510.0 Z" fill="#000"/></svg>
<div style="left:54px;top:502px;width:428px;height:14px;border:1px solid #9a9a9a;border-radius:3px;background:linear-gradient(#fbfbfb,#e6e6e6);"></div>
<svg style="position:absolute;left:260px;top:505px;" width="20" height="12" viewBox="0 0 20 12"><rect x="0" y="0" width="2" height="2" fill="#a8a8a8"/><rect x="1" y="1" width="1" height="1" fill="#fff"/><rect x="0" y="4" width="2" height="2" fill="#a8a8a8"/><rect x="1" y="5" width="1" height="1" fill="#fff"/><rect x="0" y="8" width="2" height="2" fill="#a8a8a8"/><rect x="1" y="9" width="1" height="1" fill="#fff"/><rect x="4" y="0" width="2" height="2" fill="#a8a8a8"/><rect x="5" y="1" width="1" height="1" fill="#fff"/><rect x="4" y="4" width="2" height="2" fill="#a8a8a8"/><rect x="5" y="5" width="1" height="1" fill="#fff"/><rect x="4" y="8" width="2" height="2" fill="#a8a8a8"/><rect x="5" y="9" width="1" height="1" fill="#fff"/><rect x="8" y="0" width="2" height="2" fill="#a8a8a8"/><rect x="9" y="1" width="1" height="1" fill="#fff"/><rect x="8" y="4" width="2" height="2" fill="#a8a8a8"/><rect x="9" y="5" width="1" height="1" fill="#fff"/><rect x="8" y="8" width="2" height="2" fill="#a8a8a8"/><rect x="9" y="9" width="1" height="1" fill="#fff"/><rect x="12" y="0" width="2" height="2" fill="#a8a8a8"/><rect x="13" y="1" width="1" height="1" fill="#fff"/><rect x="12" y="4" width="2" height="2" fill="#a8a8a8"/><rect x="13" y="5" width="1" height="1" fill="#fff"/><rect x="12" y="8" width="2" height="2" fill="#a8a8a8"/><rect x="13" y="9" width="1" height="1" fill="#fff"/><rect x="16" y="0" width="2" height="2" fill="#a8a8a8"/><rect x="17" y="1" width="1" height="1" fill="#fff"/><rect x="16" y="4" width="2" height="2" fill="#a8a8a8"/><rect x="17" y="5" width="1" height="1" fill="#fff"/><rect x="16" y="8" width="2" height="2" fill="#a8a8a8"/><rect x="17" y="9" width="1" height="1" fill="#fff"/></svg>
<div style="left:490px;top:502px;width:13px;height:14px;border:1px solid #9a9a9a;border-radius:3px;background:linear-gradient(#fbfbfb,#e3e3e3);"></div>
<svg style="position:absolute;left:0;top:0;width:890px;height:554px;pointer-events:none"><path d="M499.5 506.0 L499.5 514.0 L495.5 510.0 Z" fill="#000"/></svg>
<div style="left:505px;top:502px;width:14px;height:14px;border:1px solid #9a9a9a;border-radius:3px;background:linear-gradient(#fbfbfb,#e3e3e3);"></div>
<svg style="position:absolute;left:0;top:0;width:890px;height:554px;pointer-events:none"><path d="M511.0 506.0 L511.0 514.0 L515.0 510.0 Z" fill="#000"/></svg>
<svg style="position:absolute;left:542px;top:261px;" width="3" height="105" viewBox="0 0 3 105"><rect x="0" y="0.0" width="2" height="2" fill="#b4b4b4"/><rect x="1" y="1.0" width="1" height="1" fill="#fff"/><rect x="0" y="4.6" width="2" height="2" fill="#b4b4b4"/><rect x="1" y="5.6" width="1" height="1" fill="#fff"/><rect x="0" y="9.2" width="2" height="2" fill="#b4b4b4"/><rect x="1" y="10.2" width="1" height="1" fill="#fff"/><rect x="0" y="13.8" width="2" height="2" fill="#b4b4b4"/><rect x="1" y="14.8" width="1" height="1" fill="#fff"/><rect x="0" y="18.4" width="2" height="2" fill="#b4b4b4"/><rect x="1" y="19.4" width="1" height="1" fill="#fff"/><rect x="0" y="23.0" width="2" height="2" fill="#b4b4b4"/><rect x="1" y="24.0" width="1" height="1" fill="#fff"/><rect x="0" y="27.6" width="2" height="2" fill="#b4b4b4"/><rect x="1" y="28.6" width="1" height="1" fill="#fff"/><rect x="0" y="32.2" width="2" height="2" fill="#b4b4b4"/><rect x="1" y="33.2" width="1" height="1" fill="#fff"/><rect x="0" y="36.8" width="2" height="2" fill="#b4b4b4"/><rect x="1" y="37.8" width="1" height="1" fill="#fff"/><rect x="0" y="41.4" width="2" height="2" fill="#b4b4b4"/><rect x="1" y="42.4" width="1" height="1" fill="#fff"/><rect x="0" y="46.0" width="2" height="2" fill="#b4b4b4"/><rect x="1" y="47.0" width="1" height="1" fill="#fff"/><rect x="0" y="50.6" width="2" height="2" fill="#b4b4b4"/><rect x="1" y="51.6" width="1" height="1" fill="#fff"/><rect x="0" y="55.2" width="2" height="2" fill="#b4b4b4"/><rect x="1" y="56.2" width="1" height="1" fill="#fff"/><rect x="0" y="59.8" width="2" height="2" fill="#b4b4b4"/><rect x="1" y="60.8" width="1" height="1" fill="#fff"/><rect x="0" y="64.4" width="2" height="2" fill="#b4b4b4"/><rect x="1" y="65.4" width="1" height="1" fill="#fff"/><rect x="0" y="69.0" width="2" height="2" fill="#b4b4b4"/><rect x="1" y="70.0" width="1" height="1" fill="#fff"/><rect x="0" y="73.6" width="2" height="2" fill="#b4b4b4"/><rect x="1" y="74.6" width="1" height="1" fill="#fff"/><rect x="0" y="78.2" width="2" height="2" fill="#b4b4b4"/><rect x="1" y="79.2" width="1" height="1" fill="#fff"/><rect x="0" y="82.8" width="2" height="2" fill="#b4b4b4"/><rect x="1" y="83.8" width="1" height="1" fill="#fff"/><rect x="0" y="87.4" width="2" height="2" fill="#b4b4b4"/><rect x="1" y="88.4" width="1" height="1" fill="#fff"/><rect x="0" y="92.0" width="2" height="2" fill="#b4b4b4"/><rect x="1" y="93.0" width="1" height="1" fill="#fff"/><rect x="0" y="96.6" width="2" height="2" fill="#b4b4b4"/><rect x="1" y="97.6" width="1" height="1" fill="#fff"/><rect x="0" y="101.2" width="2" height="2" fill="#b4b4b4"/><rect x="1" y="102.2" width="1" height="1" fill="#fff"/></svg>
<div style="left:79px;top:139px;width:68px;height:18px;border:1px solid #000;background:#ffffe1;box-shadow:2px 2px 3px rgba(0,0,0,0.35);"></div>
<div class="t" style="left:81.6px;top:142.09px;font-size:11px;line-height:11px;color:#000;letter-spacing:-0.069px;">First Feature</div>
<div style="left:546px;top:151px;width:334px;height:368px;border-top:1px solid #adadad;"></div>
<div style="left:627px;top:136px;width:98px;height:15px;border:1px solid #adadad;border-bottom:none;border-radius:2px 2px 0 0;background:linear-gradient(#f6f6f6,#e4e4e4);"></div>
<div style="left:726px;top:136px;width:100px;height:15px;border:1px solid #adadad;border-bottom:none;border-radius:2px 2px 0 0;background:linear-gradient(#f6f6f6,#e4e4e4);"></div>
<div style="left:546px;top:132px;width:80px;height:20px;border:1px solid #adadad;border-bottom:none;border-radius:2px 2px 0 0;background:#f0f0f0;"></div>
<div class="t" style="left:557.8px;top:137.89px;font-size:11px;line-height:11px;color:#000;letter-spacing:-0.362px;">Composition</div>
<div class="t" style="left:639.5px;top:138.69px;font-size:11px;line-height:11px;color:#000;letter-spacing:0.081px;">Item properties</div>
<div class="t" style="left:737.8px;top:138.69px;font-size:11px;line-height:11px;color:#000;letter-spacing:-0.079px;">Atlas generation</div>
<svg style="position:absolute;left:550px;top:160px;" width="120" height="4" viewBox="0 0 120 4"><rect x="0" y="0" width="2" height="2" fill="#c4c4c4"/><rect x="1" y="1" width="1" height="1" fill="#fff"/><rect x="2" y="2" width="2" height="2" fill="#c4c4c4"/><rect x="3" y="3" width="1" height="1" fill="#fff"/><rect x="4" y="0" width="2" height="2" fill="#c4c4c4"/><rect x="5" y="1" width="1" height="1" fill="#fff"/><rect x="6" y="2" width="2" height="2" fill="#c4c4c4"/><rect x="7" y="3" width="1" height="1" fill="#fff"/><rect x="8" y="0" width="2" height="2" fill="#c4c4c4"/><rect x="9" y="1" width="1" height="1" fill="#fff"/><rect x="10" y="2" width="2" height="2" fill="#c4c4c4"/><rect x="11" y="3" width="1" height="1" fill="#fff"/><rect x="12" y="0" width="2" height="2" fill="#c4c4c4"/><rect x="13" y="1" width="1" height="1" fill="#fff"/><rect x="14" y="2" width="2" height="2" fill="#c4c4c4"/><rect x="15" y="3" width="1" height="1" fill="#fff"/><rect x="16" y="0" width="2" height="2" fill="#c4c4c4"/><rect x="17" y="1" width="1" height="1" fill="#fff"/><rect x="18" y="2" width="2" height="2" fill="#c4c4c4"/><rect x="19" y="3" width="1" height="1" fill="#fff"/><rect x="20" y="0" width="2" height="2" fill="#c4c4c4"/><rect x="21" y="1" width="1" height="1" fill="#fff"/><rect x="22" y="2" width="2" height="2" fill="#c4c4c4"/><rect x="23" y="3" width="1" height="1" fill="#fff"/><rect x="24" y="0" width="2" height="2" fill="#c4c4c4"/><rect x="25" y="1" width="1" height="1" fill="#fff"/><rect x="26" y="2" width="2" height="2" fill="#c4c4c4"/><rect x="27" y="3" width="1" height="1" fill="#fff"/><rect x="28" y="0" width="2" height="2" fill="#c4c4c4"/><rect x="29" y="1" width="1" height="1" fill="#fff"/><rect x="30" y="2" width="2" height="2" fill="#c4c4c4"/><rect x="31" y="3" width="1" height="1" fill="#fff"/><rect x="32" y="0" width="2" height="2" fill="#c4c4c4"/><rect x="33" y="1" width="1" height="1" fill="#fff"/><rect x="34" y="2" width="2" height="2" fill="#c4c4c4"/><rect x="35" y="3" width="1" height="1" fill="#fff"/><rect x="36" y="0" width="2" height="2" fill="#c4c4c4"/><rect x="37" y="1" width="1" height="1" fill="#fff"/><rect x="38" y="2" width="2" height="2" fill="#c4c4c4"/><rect x="39" y="3" width="1" height="1" fill="#fff"/><rect x="40" y="0" width="2" height="2" fill="#c4c4c4"/><rect x="41" y="1" width="1" height="1" fill="#fff"/><rect x="42" y="2" width="2" height="2" fill="#c4c4c4"/><rect x="43" y="3" width="1" height="1" fill="#fff"/><rect x="44" y="0" width="2" height="2" fill="#c4c4c4"/><rect x="45" y="1" width="1" height="1" fill="#fff"/><rect x="46" y="2" width="2" height="2" fill="#c4c4c4"/><rect x="47" y="3" width="1" height="1" fill="#fff"/><rect x="48" y="0" width="2" height="2" fill="#c4c4c4"/><rect x="49" y="1" width="1" height="1" fill="#fff"/><rect x="50" y="2" width="2" height="2" fill="#c4c4c4"/><rect x="51" y="3" width="1" height="1" fill="#fff"/><rect x="52" y="0" width="2" height="2" fill="#c4c4c4"/><rect x="53" y="1" width="1" height="1" fill="#fff"/><rect x="54" y="2" width="2" height="2" fill="#c4c4c4"/><rect x="55" y="3" width="1" height="1" fill="#fff"/><rect x="56" y="0" width="2" height="2" fill="#c4c4c4"/><rect x="57" y="1" width="1" height="1" fill="#fff"/><rect x="58" y="2" width="2" height="2" fill="#c4c4c4"/><rect x="59" y="3" width="1" height="1" fill="#fff"/><rect x="60" y="0" width="2" height="2" fill="#c4c4c4"/><rect x="61" y="1" width="1" height="1" fill="#fff"/><rect x="62" y="2" width="2" height="2" fill="#c4c4c4"/><rect x="63" y="3" width="1" height="1" fill="#fff"/><rect x="64" y="0" width="2" height="2" fill="#c4c4c4"/><rect x="65" y="1" width="1" height="1" fill="#fff"/><rect x="66" y="2" width="2" height="2" fill="#c4c4c4"/><rect x="67" y="3" width="1" height="1" fill="#fff"/><rect x="68" y="0" width="2" height="2" fill="#c4c4c4"/><rect x="69" y="1" width="1" height="1" fill="#fff"/><rect x="70" y="2" width="2" height="2" fill="#c4c4c4"/><rect x="71" y="3" width="1" height="1" fill="#fff"/><rect x="72" y="0" width="2" height="2" fill="#c4c4c4"/><rect x="73" y="1" width="1" height="1" fill="#fff"/><rect x="74" y="2" width="2" height="2" fill="#c4c4c4"/><rect x="75" y="3" width="1" height="1" fill="#fff"/><rect x="76" y="0" width="2" height="2" fill="#c4c4c4"/><rect x="77" y="1" width="1" height="1" fill="#fff"/><rect x="78" y="2" width="2" height="2" fill="#c4c4c4"/><rect x="79" y="3" width="1" height="1" fill="#fff"/><rect x="80" y="0" width="2" height="2" fill="#c4c4c4"/><rect x="81" y="1" width="1" height="1" fill="#fff"/><rect x="82" y="2" width="2" height="2" fill="#c4c4c4"/><rect x="83" y="3" width="1" height="1" fill="#fff"/><rect x="84" y="0" width="2" height="2" fill="#c4c4c4"/><rect x="85" y="1" width="1" height="1" fill="#fff"/><rect x="86" y="2" width="2" height="2" fill="#c4c4c4"/><rect x="87" y="3" width="1" height="1" fill="#fff"/><rect x="88" y="0" width="2" height="2" fill="#c4c4c4"/><rect x="89" y="1" width="1" height="1" fill="#fff"/><rect x="90" y="2" width="2" height="2" fill="#c4c4c4"/><rect x="91" y="3" width="1" height="1" fill="#fff"/><rect x="92" y="0" width="2" height="2" fill="#c4c4c4"/><rect x="93" y="1" width="1" height="1" fill="#fff"/><rect x="94" y="2" width="2" height="2" fill="#c4c4c4"/><rect x="95" y="3" width="1" height="1" fill="#fff"/><rect x="96" y="0" width="2" height="2" fill="#c4c4c4"/><rect x="97" y="1" width="1" height="1" fill="#fff"/><rect x="98" y="2" width="2" height="2" fill="#c4c4c4"/><rect x="99" y="3" width="1" height="1" fill="#fff"/><rect x="100" y="0" width="2" height="2" fill="#c4c4c4"/><rect x="101" y="1" width="1" height="1" fill="#fff"/><rect x="102" y="2" width="2" height="2" fill="#c4c4c4"/><rect x="103" y="3" width="1" height="1" fill="#fff"/><rect x="104" y="0" width="2" height="2" fill="#c4c4c4"/><rect x="105" y="1" width="1" height="1" fill="#fff"/><rect x="106" y="2" width="2" height="2" fill="#c4c4c4"/><rect x="107" y="3" width="1" height="1" fill="#fff"/><rect x="108" y="0" width="2" height="2" fill="#c4c4c4"/><rect x="109" y="1" width="1" height="1" fill="#fff"/><rect x="110" y="2" width="2" height="2" fill="#c4c4c4"/><rect x="111" y="3" width="1" height="1" fill="#fff"/><rect x="112" y="0" width="2" height="2" fill="#c4c4c4"/><rect x="113" y="1" width="1" height="1" fill="#fff"/><rect x="114" y="2" width="2" height="2" fill="#c4c4c4"/><rect x="115" y="3" width="1" height="1" fill="#fff"/><rect x="116" y="0" width="2" height="2" fill="#c4c4c4"/><rect x="117" y="1" width="1" height="1" fill="#fff"/><rect x="118" y="2" width="2" height="2" fill="#c4c4c4"/><rect x="119" y="3" width="1" height="1" fill="#fff"/></svg>
<svg style="position:absolute;left:737px;top:160px;" width="126" height="4" viewBox="0 0 126 4"><rect x="0" y="0" width="2" height="2" fill="#c4c4c4"/><rect x="1" y="1" width="1" height="1" fill="#fff"/><rect x="2" y="2" width="2" height="2" fill="#c4c4c4"/><rect x="3" y="3" width="1" height="1" fill="#fff"/><rect x="4" y="0" width="2" height="2" fill="#c4c4c4"/><rect x="5" y="1" width="1" height="1" fill="#fff"/><rect x="6" y="2" width="2" height="2" fill="#c4c4c4"/><rect x="7" y="3" width="1" height="1" fill="#fff"/><rect x="8" y="0" width="2" height="2" fill="#c4c4c4"/><rect x="9" y="1" width="1" height="1" fill="#fff"/><rect x="10" y="2" width="2" height="2" fill="#c4c4c4"/><rect x="11" y="3" width="1" height="1" fill="#fff"/><rect x="12" y="0" width="2" height="2" fill="#c4c4c4"/><rect x="13" y="1" width="1" height="1" fill="#fff"/><rect x="14" y="2" width="2" height="2" fill="#c4c4c4"/><rect x="15" y="3" width="1" height="1" fill="#fff"/><rect x="16" y="0" width="2" height="2" fill="#c4c4c4"/><rect x="17" y="1" width="1" height="1" fill="#fff"/><rect x="18" y="2" width="2" height="2" fill="#c4c4c4"/><rect x="19" y="3" width="1" height="1" fill="#fff"/><rect x="20" y="0" width="2" height="2" fill="#c4c4c4"/><rect x="21" y="1" width="1" height="1" fill="#fff"/><rect x="22" y="2" width="2" height="2" fill="#c4c4c4"/><rect x="23" y="3" width="1" height="1" fill="#fff"/><rect x="24" y="0" width="2" height="2" fill="#c4c4c4"/><rect x="25" y="1" width="1" height="1" fill="#fff"/><rect x="26" y="2" width="2" height="2" fill="#c4c4c4"/><rect x="27" y="3" width="1" height="1" fill="#fff"/><rect x="28" y="0" width="2" height="2" fill="#c4c4c4"/><rect x="29" y="1" width="1" height="1" fill="#fff"/><rect x="30" y="2" width="2" height="2" fill="#c4c4c4"/><rect x="31" y="3" width="1" height="1" fill="#fff"/><rect x="32" y="0" width="2" height="2" fill="#c4c4c4"/><rect x="33" y="1" width="1" height="1" fill="#fff"/><rect x="34" y="2" width="2" height="2" fill="#c4c4c4"/><rect x="35" y="3" width="1" height="1" fill="#fff"/><rect x="36" y="0" width="2" height="2" fill="#c4c4c4"/><rect x="37" y="1" width="1" height="1" fill="#fff"/><rect x="38" y="2" width="2" height="2" fill="#c4c4c4"/><rect x="39" y="3" width="1" height="1" fill="#fff"/><rect x="40" y="0" width="2" height="2" fill="#c4c4c4"/><rect x="41" y="1" width="1" height="1" fill="#fff"/><rect x="42" y="2" width="2" height="2" fill="#c4c4c4"/><rect x="43" y="3" width="1" height="1" fill="#fff"/><rect x="44" y="0" width="2" height="2" fill="#c4c4c4"/><rect x="45" y="1" width="1" height="1" fill="#fff"/><rect x="46" y="2" width="2" height="2" fill="#c4c4c4"/><rect x="47" y="3" width="1" height="1" fill="#fff"/><rect x="48" y="0" width="2" height="2" fill="#c4c4c4"/><rect x="49" y="1" width="1" height="1" fill="#fff"/><rect x="50" y="2" width="2" height="2" fill="#c4c4c4"/><rect x="51" y="3" width="1" height="1" fill="#fff"/><rect x="52" y="0" width="2" height="2" fill="#c4c4c4"/><rect x="53" y="1" width="1" height="1" fill="#fff"/><rect x="54" y="2" width="2" height="2" fill="#c4c4c4"/><rect x="55" y="3" width="1" height="1" fill="#fff"/><rect x="56" y="0" width="2" height="2" fill="#c4c4c4"/><rect x="57" y="1" width="1" height="1" fill="#fff"/><rect x="58" y="2" width="2" height="2" fill="#c4c4c4"/><rect x="59" y="3" width="1" height="1" fill="#fff"/><rect x="60" y="0" width="2" height="2" fill="#c4c4c4"/><rect x="61" y="1" width="1" height="1" fill="#fff"/><rect x="62" y="2" width="2" height="2" fill="#c4c4c4"/><rect x="63" y="3" width="1" height="1" fill="#fff"/><rect x="64" y="0" width="2" height="2" fill="#c4c4c4"/><rect x="65" y="1" width="1" height="1" fill="#fff"/><rect x="66" y="2" width="2" height="2" fill="#c4c4c4"/><rect x="67" y="3" width="1" height="1" fill="#fff"/><rect x="68" y="0" width="2" height="2" fill="#c4c4c4"/><rect x="69" y="1" width="1" height="1" fill="#fff"/><rect x="70" y="2" width="2" height="2" fill="#c4c4c4"/><rect x="71" y="3" width="1" height="1" fill="#fff"/><rect x="72" y="0" width="2" height="2" fill="#c4c4c4"/><rect x="73" y="1" width="1" height="1" fill="#fff"/><rect x="74" y="2" width="2" height="2" fill="#c4c4c4"/><rect x="75" y="3" width="1" height="1" fill="#fff"/><rect x="76" y="0" width="2" height="2" fill="#c4c4c4"/><rect x="77" y="1" width="1" height="1" fill="#fff"/><rect x="78" y="2" width="2" height="2" fill="#c4c4c4"/><rect x="79" y="3" width="1" height="1" fill="#fff"/><rect x="80" y="0" width="2" height="2" fill="#c4c4c4"/><rect x="81" y="1" width="1" height="1" fill="#fff"/><rect x="82" y="2" width="2" height="2" fill="#c4c4c4"/><rect x="83" y="3" width="1" height="1" fill="#fff"/><rect x="84" y="0" width="2" height="2" fill="#c4c4c4"/><rect x="85" y="1" width="1" height="1" fill="#fff"/><rect x="86" y="2" width="2" height="2" fill="#c4c4c4"/><rect x="87" y="3" width="1" height="1" fill="#fff"/><rect x="88" y="0" width="2" height="2" fill="#c4c4c4"/><rect x="89" y="1" width="1" height="1" fill="#fff"/><rect x="90" y="2" width="2" height="2" fill="#c4c4c4"/><rect x="91" y="3" width="1" height="1" fill="#fff"/><rect x="92" y="0" width="2" height="2" fill="#c4c4c4"/><rect x="93" y="1" width="1" height="1" fill="#fff"/><rect x="94" y="2" width="2" height="2" fill="#c4c4c4"/><rect x="95" y="3" width="1" height="1" fill="#fff"/><rect x="96" y="0" width="2" height="2" fill="#c4c4c4"/><rect x="97" y="1" width="1" height="1" fill="#fff"/><rect x="98" y="2" width="2" height="2" fill="#c4c4c4"/><rect x="99" y="3" width="1" height="1" fill="#fff"/><rect x="100" y="0" width="2" height="2" fill="#c4c4c4"/><rect x="101" y="1" width="1" height="1" fill="#fff"/><rect x="102" y="2" width="2" height="2" fill="#c4c4c4"/><rect x="103" y="3" width="1" height="1" fill="#fff"/><rect x="104" y="0" width="2" height="2" fill="#c4c4c4"/><rect x="105" y="1" width="1" height="1" fill="#fff"/><rect x="106" y="2" width="2" height="2" fill="#c4c4c4"/><rect x="107" y="3" width="1" height="1" fill="#fff"/><rect x="108" y="0" width="2" height="2" fill="#c4c4c4"/><rect x="109" y="1" width="1" height="1" fill="#fff"/><rect x="110" y="2" width="2" height="2" fill="#c4c4c4"/><rect x="111" y="3" width="1" height="1" fill="#fff"/><rect x="112" y="0" width="2" height="2" fill="#c4c4c4"/><rect x="113" y="1" width="1" height="1" fill="#fff"/><rect x="114" y="2" width="2" height="2" fill="#c4c4c4"/><rect x="115" y="3" width="1" height="1" fill="#fff"/><rect x="116" y="0" width="2" height="2" fill="#c4c4c4"/><rect x="117" y="1" width="1" height="1" fill="#fff"/><rect x="118" y="2" width="2" height="2" fill="#c4c4c4"/><rect x="119" y="3" width="1" height="1" fill="#fff"/><rect x="120" y="0" width="2" height="2" fill="#c4c4c4"/><rect x="121" y="1" width="1" height="1" fill="#fff"/><rect x="122" y="2" width="2" height="2" fill="#c4c4c4"/><rect x="123" y="3" width="1" height="1" fill="#fff"/><rect x="124" y="0" width="2" height="2" fill="#c4c4c4"/><rect x="125" y="1" width="1" height="1" fill="#fff"/><rect x="126" y="2" width="2" height="2" fill="#c4c4c4"/><rect x="127" y="3" width="1" height="1" fill="#fff"/></svg>
<div class="t" style="left:681.6px;top:158.61px;font-size:9.2px;line-height:9.2px;color:#000;">Composition</div>
<div style="left:866px;top:156px;width:12px;height:11px;border:1px solid #8a8a8a;border-radius:2px;background:#f8f8f8;"></div>
<svg style="position:absolute;left:867px;top:157px;" width="12" height="11" viewBox="0 0 12 11"><path d="M2.5 2 L9.5 9 M9.5 2 L2.5 9" stroke="#000" stroke-width="1.4"/></svg>
<div style="left:546px;top:173px;width:333px;height:345px;border:1px solid #adadad;border-radius:2px;"></div>
<div style="left:863px;top:175px;width:14px;height:14px;border:1px solid #9a9a9a;border-radius:3px;background:linear-gradient(#fbfbfb,#e3e3e3);"></div>
<svg style="position:absolute;left:0;top:0;width:890px;height:554px;pointer-events:none"><path d="M867.0 185.0 L875.0 185.0 L871.0 181.0 Z" fill="#000"/></svg>
<div style="left:863px;top:191px;width:16px;height:296px;background:repeating-conic-gradient(#e2e2e2 0 25%,#fbfbfb 0 50%) 0 0/2px 2px;"></div>
<div style="left:863px;top:191px;width:14px;height:192px;border:1px solid #9a9a9a;border-radius:3px;background:linear-gradient(90deg,#fbfbfb,#e6e6e6);"></div>
<svg style="position:absolute;left:866px;top:279px;" width="12" height="20" viewBox="0 0 12 20"><rect x="0" y="0" width="2" height="2" fill="#a8a8a8"/><rect x="1" y="1" width="1" height="1" fill="#fff"/><rect x="0" y="4" width="2" height="2" fill="#a8a8a8"/><rect x="1" y="5" width="1" height="1" fill="#fff"/><rect x="0" y="8" width="2" height="2" fill="#a8a8a8"/><rect x="1" y="9" width="1" height="1" fill="#fff"/><rect x="0" y="12" width="2" height="2" fill="#a8a8a8"/><rect x="1" y="13" width="1" height="1" fill="#fff"/><rect x="0" y="16" width="2" height="2" fill="#a8a8a8"/><rect x="1" y="17" width="1" height="1" fill="#fff"/><rect x="4" y="0" width="2" height="2" fill="#a8a8a8"/><rect x="5" y="1" width="1" height="1" fill="#fff"/><rect x="4" y="4" width="2" height="2" fill="#a8a8a8"/><rect x="5" y="5" width="1" height="1" fill="#fff"/><rect x="4" y="8" width="2" height="2" fill="#a8a8a8"/><rect x="5" y="9" width="1" height="1" fill="#fff"/><rect x="4" y="12" width="2" height="2" fill="#a8a8a8"/><rect x="5" y="13" width="1" height="1" fill="#fff"/><rect x="4" y="16" width="2" height="2" fill="#a8a8a8"/><rect x="5" y="17" width="1" height="1" fill="#fff"/><rect x="8" y="0" width="2" height="2" fill="#a8a8a8"/><rect x="9" y="1" width="1" height="1" fill="#fff"/><rect x="8" y="4" width="2" height="2" fill="#a8a8a8"/><rect x="9" y="5" width="1" height="1" fill="#fff"/><rect x="8" y="8" width="2" height="2" fill="#a8a8a8"/><rect x="9" y="9" width="1" height="1" fill="#fff"/><rect x="8" y="12" width="2" height="2" fill="#a8a8a8"/><rect x="9" y="13" width="1" height="1" fill="#fff"/><rect x="8" y="16" width="2" height="2" fill="#a8a8a8"/><rect x="9" y="17" width="1" height="1" fill="#fff"/></svg>
<div style="left:863px;top:486px;width:14px;height:14px;border:1px solid #9a9a9a;border-radius:3px;background:linear-gradient(#fbfbfb,#e3e3e3);"></div>
<svg style="position:absolute;left:0;top:0;width:890px;height:554px;pointer-events:none"><path d="M867.0 496.0 L875.0 496.0 L871.0 492.0 Z" fill="#000"/></svg>
<div style="left:863px;top:502px;width:14px;height:14px;border:1px solid #9a9a9a;border-radius:3px;background:linear-gradient(#fbfbfb,#e3e3e3);"></div>
<svg style="position:absolute;left:0;top:0;width:890px;height:554px;pointer-events:none"><path d="M867.0 508.0 L875.0 508.0 L871.0 512.0 Z" fill="#000"/></svg>
<div style="left:559px;top:192px;width:292px;height:286px;border:1px solid #c4c4c4;border-radius:3px;"></div>
<div style="left:560px;top:185px;width:110px;height:14px;background:#f0f0f0;"></div>
<svg style="position:absolute;left:561px;top:191px;" width="12" height="8" viewBox="0 0 12 8"><path d="M0.5 0.5 H11.5 L6 7.5 Z" fill="#222"/></svg>
<div class="t" style="left:579.4px;top:189.89px;font-size:11px;line-height:11px;color:#000;letter-spacing:-0.157px;">Paper and quality</div>
<div class="t" style="left:571.4px;top:213.39px;font-size:11px;line-height:11px;color:#000;letter-spacing:-0.382px;">Presets</div>
<div style="left:662px;top:212px;width:175px;height:18px;border:1px solid #acacac;border-radius:3px;background:linear-gradient(#f4f4f4,#e6e6e6);"></div>
<div style="left:822px;top:213px;width:1px;height:18px;background:#c0c0c0;"></div>
<svg style="position:absolute;left:826px;top:220px;" width="8" height="5" viewBox="0 0 8 5"><path d="M0 0 H8 L4 4.5 Z" fill="#000"/></svg>
<div class="t" style="left:667px;top:216.69px;font-size:11px;line-height:11px;color:#000;letter-spacing:-0.176px;">A4 (210x297 mm)</div>
<div class="t" style="left:571.9px;top:242.59px;font-size:11px;line-height:11px;color:#000;letter-spacing:-0.100px;">Width</div>
<div style="left:662px;top:238px;width:175px;height:17px;border:1px solid #acacac;border-radius:3px;background:#fff;"></div>
<div style="left:822px;top:239px;width:16px;height:17px;border-left:1px solid #c8c8c8;background:linear-gradient(#f8f8f8,#e8e8e8);border-radius:0 2px 2px 0;"></div>
<div style="left:823px;top:247px;width:15px;height:1px;background:#d0d0d0;"></div>
<svg style="position:absolute;left:826px;top:240px;" width="8" height="5" viewBox="0 0 8 5"><path d="M0 4.5 H8 L4 0 Z" fill="#000"/></svg>
<svg style="position:absolute;left:826px;top:250px;" width="8" height="5" viewBox="0 0 8 5"><path d="M0 0 H8 L4 4.5 Z" fill="#000"/></svg>
<div class="t" style="left:667px;top:242.19px;font-size:11px;line-height:11px;color:#000;letter-spacing:-0.185px;">297.00</div>
<div class="t" style="left:571.9px;top:267.39px;font-size:11px;line-height:11px;color:#000;letter-spacing:-0.148px;">Height</div>
<div style="left:662px;top:263px;width:175px;height:17px;border:1px solid #acacac;border-radius:3px;background:#fff;"></div>
<div style="left:822px;top:264px;width:16px;height:17px;border-left:1px solid #c8c8c8;background:linear-gradient(#f8f8f8,#e8e8e8);border-radius:0 2px 2px 0;"></div>
<div style="left:823px;top:272px;width:15px;height:1px;background:#d0d0d0;"></div>
<svg style="position:absolute;left:826px;top:265px;" width="8" height="5" viewBox="0 0 8 5"><path d="M0 4.5 H8 L4 0 Z" fill="#000"/></svg>
<svg style="position:absolute;left:826px;top:275px;" width="8" height="5" viewBox="0 0 8 5"><path d="M0 0 H8 L4 4.5 Z" fill="#000"/></svg>
<div class="t" style="left:667px;top:267.19px;font-size:11px;line-height:11px;color:#000;letter-spacing:0.035px;">210.00</div>
<div class="t" style="left:571.9px;top:292.69px;font-size:11px;line-height:11px;color:#000;letter-spacing:-0.440px;">Units</div>
<div style="left:662px;top:288px;width:175px;height:18px;border:1px solid #acacac;border-radius:3px;background:linear-gradient(#f4f4f4,#e6e6e6);"></div>
<div style="left:822px;top:289px;width:1px;height:18px;background:#c0c0c0;"></div>
<svg style="position:absolute;left:826px;top:296px;" width="8" height="5" viewBox="0 0 8 5"><path d="M0 0 H8 L4 4.5 Z" fill="#000"/></svg>
<div class="t" style="left:667px;top:292.69px;font-size:11px;line-height:11px;color:#000;letter-spacing:-0.500px;">mm</div>
<div class="t" style="left:571.9px;top:318.49px;font-size:11px;line-height:11px;color:#000;letter-spacing:-0.241px;">Number of pages</div>
<div style="left:662px;top:314px;width:175px;height:17px;border:1px solid #acacac;border-radius:3px;background:#fff;"></div>
<div style="left:822px;top:315px;width:16px;height:17px;border-left:1px solid #c8c8c8;background:linear-gradient(#f8f8f8,#e8e8e8);border-radius:0 2px 2px 0;"></div>
<div style="left:823px;top:323px;width:15px;height:1px;background:#d0d0d0;"></div>
<svg style="position:absolute;left:826px;top:316px;" width="8" height="5" viewBox="0 0 8 5"><path d="M0 4.5 H8 L4 0 Z" fill="#000"/></svg>
<svg style="position:absolute;left:826px;top:326px;" width="8" height="5" viewBox="0 0 8 5"><path d="M0 0 H8 L4 4.5 Z" fill="#000"/></svg>
<div class="t" style="left:667px;top:318.19px;font-size:11px;line-height:11px;color:#000;">1</div>
<div class="t" style="left:571.9px;top:340.99px;font-size:11px;line-height:11px;color:#000;letter-spacing:-0.019px;">Orientation</div>
<div style="left:662px;top:339px;width:175px;height:18px;border:1px solid #acacac;border-radius:3px;background:linear-gradient(#f4f4f4,#e6e6e6);"></div>
<div style="left:822px;top:340px;width:1px;height:18px;background:#c0c0c0;"></div>
<svg style="position:absolute;left:826px;top:347px;" width="8" height="5" viewBox="0 0 8 5"><path d="M0 0 H8 L4 4.5 Z" fill="#000"/></svg>
<div class="t" style="left:667px;top:343.69px;font-size:11px;line-height:11px;color:#000;letter-spacing:-0.438px;">Landscape</div>
<div class="t" style="left:571.9px;top:370.69px;font-size:11px;line-height:11px;color:#000;letter-spacing:-0.308px;">Page background</div>
<div style="left:662px;top:365px;width:175px;height:23px;border:1px solid #acacac;border-radius:3px;background:linear-gradient(#f4f4f4,#e4e4e4);"></div>
<div style="left:716px;top:370px;width:16px;height:16px;background:#fff;"></div>
<div class="t" style="left:735.6px;top:372.69px;font-size:11px;line-height:11px;color:#000;letter-spacing:0.082px;">Change...</div>
<div class="t" style="left:571.9px;top:401.79px;font-size:11px;line-height:11px;color:#000;letter-spacing:-0.089px;">Export resolution</div>
<div style="left:662px;top:397px;width:175px;height:17px;border:1px solid #acacac;border-radius:3px;background:#fff;"></div>
<div style="left:822px;top:398px;width:16px;height:17px;border-left:1px solid #c8c8c8;background:linear-gradient(#f8f8f8,#e8e8e8);border-radius:0 2px 2px 0;"></div>
<div style="left:823px;top:406px;width:15px;height:1px;background:#d0d0d0;"></div>
<svg style="position:absolute;left:826px;top:399px;" width="8" height="5" viewBox="0 0 8 5"><path d="M0 4.5 H8 L4 0 Z" fill="#000"/></svg>
<svg style="position:absolute;left:826px;top:409px;" width="8" height="5" viewBox="0 0 8 5"><path d="M0 0 H8 L4 4.5 Z" fill="#000"/></svg>
<div class="t" style="left:667px;top:401.19px;font-size:11px;line-height:11px;color:#000;letter-spacing:-0.207px;">300 dpi</div>
<div style="left:572px;top:425px;width:11px;height:11px;border:1px solid #8e8e8e;background:linear-gradient(135deg,#dcdcdc,#fff);"></div>
<div class="t" style="left:589.6px;top:425.69px;font-size:11px;line-height:11px;color:#000;letter-spacing:-0.136px;">Print as raster</div>
<div style="left:572px;top:449px;width:11px;height:11px;border:1px solid #8e8e8e;background:linear-gradient(135deg,#dcdcdc,#fff);"></div>
<div class="t" style="left:589.6px;top:449.99px;font-size:11px;line-height:11px;color:#000;letter-spacing:-0.093px;">World file on</div>
<div style="left:662px;top:446px;width:175px;height:18px;border:1px solid #acacac;border-radius:3px;background:linear-gradient(#f4f4f4,#e6e6e6);"></div>
<div style="left:822px;top:447px;width:1px;height:18px;background:#c0c0c0;"></div>
<svg style="position:absolute;left:826px;top:454px;" width="8" height="5" viewBox="0 0 8 5"><path d="M0 0 H8 L4 4.5 Z" fill="#777"/></svg>
<div class="t" style="left:667px;top:450.69px;font-size:11px;line-height:11px;color:#6d6d6d;letter-spacing:-0.464px;">Map 0</div>
<div style="left:559px;top:491px;width:292px;height:40px;border:1px solid #c4c4c4;border-radius:3px;"></div>
<div style="left:560px;top:484px;width:46px;height:14px;background:#f0f0f0;"></div>
<svg style="position:absolute;left:561px;top:490px;" width="12" height="8" viewBox="0 0 12 8"><path d="M0.5 0.5 H11.5 L6 7.5 Z" fill="#222"/></svg>
<div class="t" style="left:579.6px;top:488.59px;font-size:11px;line-height:11px;color:#000;letter-spacing:-0.500px;">Grid</div>
<div style="left:629px;top:511px;width:208px;height:19px;border:1px solid #acacac;border-radius:3px;background:#fff;"></div>
<div style="left:822px;top:512px;width:16px;height:19px;border-left:1px solid #c8c8c8;background:linear-gradient(#f8f8f8,#e8e8e8);border-radius:0 2px 2px 0;"></div>
<div style="left:823px;top:521px;width:15px;height:1px;background:#d0d0d0;"></div>
<svg style="position:absolute;left:826px;top:513px;" width="8" height="5" viewBox="0 0 8 5"><path d="M0 4.5 H8 L4 0 Z" fill="#000"/></svg>
<svg style="position:absolute;left:826px;top:525px;" width="8" height="5" viewBox="0 0 8 5"><path d="M0 0 H8 L4 4.5 Z" fill="#000"/></svg>
<div class="t" style="left:634px;top:516.19px;font-size:11px;line-height:11px;color:#000;">10.00</div>
<div class="t" style="left:571.9px;top:517.19px;font-size:11px;line-height:11px;color:#000;">Spacing</div>
<div style="left:547px;top:519px;width:316px;height:3px;background:#f0f0f0;"></div>
<div style="left:546px;top:173px;width:333px;height:345px;border:1px solid #adadad;border-radius:2px;"></div>
<div style="left:9px;top:520px;width:872px;height:25px;background:#f0f0f0;"></div>
<div style="left:546px;top:173px;width:333px;height:345px;border:1px solid #adadad;border-radius:2px;"></div>
<div style="left:9px;top:522px;width:102px;height:20px;border:1px solid #a0a0a0;border-radius:2px;"></div>
<div class="t" style="left:11px;top:527.99px;font-size:11px;line-height:11px;color:#000;letter-spacing:-0.091px;">x: 304.661 mm</div>
<div style="left:115px;top:522px;width:102px;height:20px;border:1px solid #a0a0a0;border-radius:2px;"></div>
<div class="t" style="left:117px;top:527.99px;font-size:11px;line-height:11px;color:#000;letter-spacing:-0.158px;">y: 59.8906 mm</div>
<div style="left:221px;top:522px;width:102px;height:20px;border:1px solid #a0a0a0;border-radius:2px;"></div>
<div class="t" style="left:223px;top:527.99px;font-size:11px;line-height:11px;color:#000;letter-spacing:0.103px;">page: 1</div>
<div style="left:327px;top:522px;width:102px;height:20px;border:1px solid #a0a0a0;border-radius:2px;"></div>
<div style="left:329px;top:523px;width:97px;height:18px;border:1px solid #acacac;border-radius:2px;background:#fff;"></div>
<div style="left:412px;top:524px;width:15px;height:17px;border-left:1px solid #c8c8c8;background:linear-gradient(#f4f4f4,#e4e4e4);"></div>
<svg style="position:absolute;left:416px;top:530px;" width="8" height="5" viewBox="0 0 8 5"><path d="M0 0 H8 L4 4.5 Z" fill="#000"/></svg>
<div class="t" style="left:334px;top:528.19px;font-size:11px;line-height:11px;color:#000;letter-spacing:0.248px;">40.6%</div>
<div style="left:433px;top:522px;width:352px;height:20px;border:1px solid #a0a0a0;border-radius:2px;"></div>
<div class="t" style="left:435px;top:527.99px;font-size:11px;line-height:11px;color:#000;letter-spacing:-0.255px;">1 item selected</div>
<div style="left:789px;top:522px;width:7px;height:20px;border:1px solid #a0a0a0;border-radius:2px;"></div>
<svg style="position:absolute;left:868px;top:532px;" width="13" height="13" viewBox="0 0 13 13"><path d="M12 1 L1 12 M12 5 L5 12 M12 9 L9 12" stroke="#a0a0a0" stroke-width="1.2"/><path d="M12 2 L2 12 M12 6 L6 12 M12 10 L10 12" stroke="#fff" stroke-width="1"/></svg>
</body></html>
